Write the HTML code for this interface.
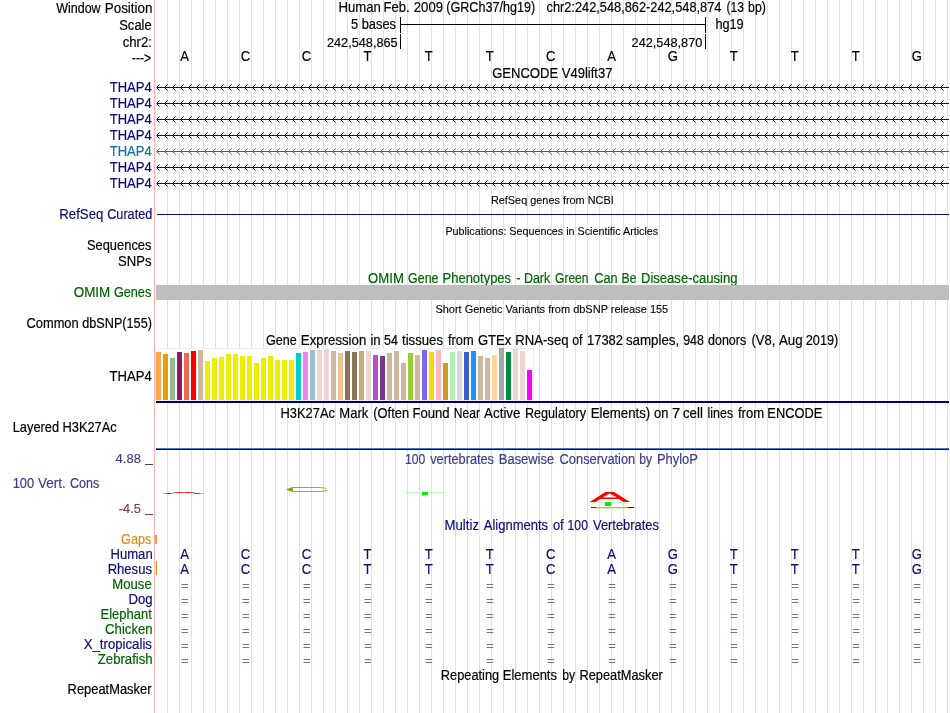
<!DOCTYPE html><html><head><meta charset="utf-8"><style>html,body{margin:0;padding:0;background:#fff;}svg{display:block;will-change:transform}text{font-family:"Liberation Sans",sans-serif;}</style></head><body>
<svg width="950" height="713" viewBox="0 0 950 713">
<rect x="0" y="0" width="950" height="713" fill="#fff"/>
<path d="M167.5 0V713M179.5 0V713M191.5 0V713M203.5 0V713M215.5 0V713M227.5 0V713M239.5 0V713M251.5 0V713M263.5 0V713M275.5 0V713M287.5 0V713M299.5 0V713M311.5 0V713M323.5 0V713M335.5 0V713M347.5 0V713M359.5 0V713M371.5 0V713M383.5 0V713M395.5 0V713M407.5 0V713M419.5 0V713M431.5 0V713M443.5 0V713M455.5 0V713M467.5 0V713M479.5 0V713M491.5 0V713M503.5 0V713M515.5 0V713M527.5 0V713M539.5 0V713M551.5 0V713M563.5 0V713M575.5 0V713M587.5 0V713M599.5 0V713M611.5 0V713M623.5 0V713M635.5 0V713M647.5 0V713M659.5 0V713M671.5 0V713M683.5 0V713M695.5 0V713M707.5 0V713M719.5 0V713M731.5 0V713M743.5 0V713M755.5 0V713M767.5 0V713M779.5 0V713M791.5 0V713M803.5 0V713M815.5 0V713M827.5 0V713M839.5 0V713M851.5 0V713M863.5 0V713M875.5 0V713M887.5 0V713M899.5 0V713M911.5 0V713M923.5 0V713M935.5 0V713M947.5 0V713" stroke="#ddddff" stroke-width="1" shape-rendering="crispEdges"/>
<text transform="translate(56.20 13) scale(0.9086 1.0)" font-size="13.75" fill="#000" stroke="#000" stroke-width="0.18" text-anchor="start" xml:space="preserve">Window</text>
<text transform="translate(104.72 13) scale(0.9774 1.0)" font-size="13.75" fill="#000" stroke="#000" stroke-width="0.18" text-anchor="start" xml:space="preserve">Position</text>
<text transform="translate(119.20 30) scale(0.9468 1.0)" font-size="13.75" fill="#000" stroke="#000" stroke-width="0.18" text-anchor="start" xml:space="preserve">Scale</text>
<text transform="translate(122.70 47) scale(0.9580 1.0)" font-size="13.75" fill="#000" stroke="#000" stroke-width="0.18" text-anchor="start" xml:space="preserve">chr2:</text>
<text transform="translate(131.80 63) scale(0.8925 1.0)" font-size="13.75" fill="#000" stroke="#000" stroke-width="0.18" text-anchor="start" xml:space="preserve">---&gt;</text>
<text transform="translate(338.44 12) scale(0.9560 1.0)" font-size="13.75" fill="#000" stroke="#000" stroke-width="0.18" text-anchor="start" xml:space="preserve">Human</text>
<text transform="translate(383.45 12) scale(0.9497 1.0)" font-size="13.75" fill="#000" stroke="#000" stroke-width="0.18" text-anchor="start" xml:space="preserve">Feb.</text>
<text transform="translate(413.80 12) scale(0.9552 1.0)" font-size="13.75" fill="#000" stroke="#000" stroke-width="0.18" text-anchor="start" xml:space="preserve">2009</text>
<text transform="translate(446.20 12) scale(0.9173 1.0)" font-size="13.75" fill="#000" stroke="#000" stroke-width="0.18" text-anchor="start" xml:space="preserve">(GRCh37/hg19)</text>
<text transform="translate(546.50 12) scale(0.9314 1.0)" font-size="13.75" fill="#000" stroke="#000" stroke-width="0.18" text-anchor="start" xml:space="preserve">chr2:242,548,862-242,548,874</text>
<text transform="translate(726.60 12) scale(0.8751 1.0)" font-size="13.75" fill="#000" stroke="#000" stroke-width="0.18" text-anchor="start" xml:space="preserve">(13</text>
<text transform="translate(748.10 12) scale(0.8915 1.0)" font-size="13.75" fill="#000" stroke="#000" stroke-width="0.18" text-anchor="start" xml:space="preserve">bp)</text>
<text transform="translate(350.90 29) scale(0.9382 1.0)" font-size="13.75" fill="#000" stroke="#000" stroke-width="0.18" text-anchor="start" xml:space="preserve">5 bases</text>
<text transform="translate(715.40 29) scale(0.9251 1.0)" font-size="13.75" fill="#000" stroke="#000" stroke-width="0.18" text-anchor="start" xml:space="preserve">hg19</text>
<text transform="translate(326.90 47) scale(0.9269 0.93)" font-size="13.75" fill="#000" stroke="#000" stroke-width="0.18" text-anchor="start" xml:space="preserve">242,548,865</text>
<text transform="translate(631.60 47) scale(0.9256 0.93)" font-size="13.75" fill="#000" stroke="#000" stroke-width="0.18" text-anchor="start" xml:space="preserve">242,548,870</text>
<g fill="#000">
<rect x="400" y="24" width="306" height="1"/>
<rect x="400" y="17" width="1" height="16"/><rect x="705" y="17" width="1" height="16"/>
<rect x="400" y="34" width="1" height="15"/><rect x="705" y="34" width="1" height="15"/>
</g>
<text transform="translate(184.50 61) scale(0.9500 1.0)" font-size="13.75" fill="#000" stroke="#000" stroke-width="0.18" text-anchor="middle" xml:space="preserve">A</text>
<text transform="translate(245.53 61) scale(0.9500 1.0)" font-size="13.75" fill="#000" stroke="#000" stroke-width="0.18" text-anchor="middle" xml:space="preserve">C</text>
<text transform="translate(306.56 61) scale(0.9500 1.0)" font-size="13.75" fill="#000" stroke="#000" stroke-width="0.18" text-anchor="middle" xml:space="preserve">C</text>
<text transform="translate(367.59 61) scale(0.9500 1.0)" font-size="13.75" fill="#000" stroke="#000" stroke-width="0.18" text-anchor="middle" xml:space="preserve">T</text>
<text transform="translate(428.62 61) scale(0.9500 1.0)" font-size="13.75" fill="#000" stroke="#000" stroke-width="0.18" text-anchor="middle" xml:space="preserve">T</text>
<text transform="translate(489.65 61) scale(0.9500 1.0)" font-size="13.75" fill="#000" stroke="#000" stroke-width="0.18" text-anchor="middle" xml:space="preserve">T</text>
<text transform="translate(550.68 61) scale(0.9500 1.0)" font-size="13.75" fill="#000" stroke="#000" stroke-width="0.18" text-anchor="middle" xml:space="preserve">C</text>
<text transform="translate(611.71 61) scale(0.9500 1.0)" font-size="13.75" fill="#000" stroke="#000" stroke-width="0.18" text-anchor="middle" xml:space="preserve">A</text>
<text transform="translate(672.74 61) scale(0.9500 1.0)" font-size="13.75" fill="#000" stroke="#000" stroke-width="0.18" text-anchor="middle" xml:space="preserve">G</text>
<text transform="translate(733.77 61) scale(0.9500 1.0)" font-size="13.75" fill="#000" stroke="#000" stroke-width="0.18" text-anchor="middle" xml:space="preserve">T</text>
<text transform="translate(794.80 61) scale(0.9500 1.0)" font-size="13.75" fill="#000" stroke="#000" stroke-width="0.18" text-anchor="middle" xml:space="preserve">T</text>
<text transform="translate(855.83 61) scale(0.9500 1.0)" font-size="13.75" fill="#000" stroke="#000" stroke-width="0.18" text-anchor="middle" xml:space="preserve">T</text>
<text transform="translate(916.86 61) scale(0.9500 1.0)" font-size="13.75" fill="#000" stroke="#000" stroke-width="0.18" text-anchor="middle" xml:space="preserve">G</text>
<text transform="translate(492.20 78) scale(0.9493 1.0)" font-size="13.75" fill="#000" stroke="#000" stroke-width="0.18" text-anchor="start" xml:space="preserve">GENCODE V49lift37</text>
<text transform="translate(109.70 92) scale(0.9492 1.0)" font-size="13.75" fill="#0c0c78" stroke="#0c0c78" stroke-width="0.18" text-anchor="start" xml:space="preserve">THAP4</text>
<path d="M157 87h792v1h-792zM157 86h1v3h-1zM158 85h1v1h-1zM158 89h1v1h-1zM165 86h1v3h-1zM166 85h1v1h-1zM166 89h1v1h-1zM173 86h1v3h-1zM174 85h1v1h-1zM174 89h1v1h-1zM181 86h1v3h-1zM182 85h1v1h-1zM182 89h1v1h-1zM189 86h1v3h-1zM190 85h1v1h-1zM190 89h1v1h-1zM197 86h1v3h-1zM198 85h1v1h-1zM198 89h1v1h-1zM205 86h1v3h-1zM206 85h1v1h-1zM206 89h1v1h-1zM213 86h1v3h-1zM214 85h1v1h-1zM214 89h1v1h-1zM221 86h1v3h-1zM222 85h1v1h-1zM222 89h1v1h-1zM229 86h1v3h-1zM230 85h1v1h-1zM230 89h1v1h-1zM237 86h1v3h-1zM238 85h1v1h-1zM238 89h1v1h-1zM245 86h1v3h-1zM246 85h1v1h-1zM246 89h1v1h-1zM253 86h1v3h-1zM254 85h1v1h-1zM254 89h1v1h-1zM261 86h1v3h-1zM262 85h1v1h-1zM262 89h1v1h-1zM269 86h1v3h-1zM270 85h1v1h-1zM270 89h1v1h-1zM277 86h1v3h-1zM278 85h1v1h-1zM278 89h1v1h-1zM285 86h1v3h-1zM286 85h1v1h-1zM286 89h1v1h-1zM293 86h1v3h-1zM294 85h1v1h-1zM294 89h1v1h-1zM301 86h1v3h-1zM302 85h1v1h-1zM302 89h1v1h-1zM309 86h1v3h-1zM310 85h1v1h-1zM310 89h1v1h-1zM317 86h1v3h-1zM318 85h1v1h-1zM318 89h1v1h-1zM325 86h1v3h-1zM326 85h1v1h-1zM326 89h1v1h-1zM333 86h1v3h-1zM334 85h1v1h-1zM334 89h1v1h-1zM341 86h1v3h-1zM342 85h1v1h-1zM342 89h1v1h-1zM349 86h1v3h-1zM350 85h1v1h-1zM350 89h1v1h-1zM357 86h1v3h-1zM358 85h1v1h-1zM358 89h1v1h-1zM365 86h1v3h-1zM366 85h1v1h-1zM366 89h1v1h-1zM373 86h1v3h-1zM374 85h1v1h-1zM374 89h1v1h-1zM381 86h1v3h-1zM382 85h1v1h-1zM382 89h1v1h-1zM389 86h1v3h-1zM390 85h1v1h-1zM390 89h1v1h-1zM397 86h1v3h-1zM398 85h1v1h-1zM398 89h1v1h-1zM405 86h1v3h-1zM406 85h1v1h-1zM406 89h1v1h-1zM413 86h1v3h-1zM414 85h1v1h-1zM414 89h1v1h-1zM421 86h1v3h-1zM422 85h1v1h-1zM422 89h1v1h-1zM429 86h1v3h-1zM430 85h1v1h-1zM430 89h1v1h-1zM437 86h1v3h-1zM438 85h1v1h-1zM438 89h1v1h-1zM445 86h1v3h-1zM446 85h1v1h-1zM446 89h1v1h-1zM453 86h1v3h-1zM454 85h1v1h-1zM454 89h1v1h-1zM461 86h1v3h-1zM462 85h1v1h-1zM462 89h1v1h-1zM469 86h1v3h-1zM470 85h1v1h-1zM470 89h1v1h-1zM477 86h1v3h-1zM478 85h1v1h-1zM478 89h1v1h-1zM485 86h1v3h-1zM486 85h1v1h-1zM486 89h1v1h-1zM493 86h1v3h-1zM494 85h1v1h-1zM494 89h1v1h-1zM501 86h1v3h-1zM502 85h1v1h-1zM502 89h1v1h-1zM509 86h1v3h-1zM510 85h1v1h-1zM510 89h1v1h-1zM517 86h1v3h-1zM518 85h1v1h-1zM518 89h1v1h-1zM525 86h1v3h-1zM526 85h1v1h-1zM526 89h1v1h-1zM533 86h1v3h-1zM534 85h1v1h-1zM534 89h1v1h-1zM541 86h1v3h-1zM542 85h1v1h-1zM542 89h1v1h-1zM549 86h1v3h-1zM550 85h1v1h-1zM550 89h1v1h-1zM557 86h1v3h-1zM558 85h1v1h-1zM558 89h1v1h-1zM565 86h1v3h-1zM566 85h1v1h-1zM566 89h1v1h-1zM573 86h1v3h-1zM574 85h1v1h-1zM574 89h1v1h-1zM581 86h1v3h-1zM582 85h1v1h-1zM582 89h1v1h-1zM589 86h1v3h-1zM590 85h1v1h-1zM590 89h1v1h-1zM597 86h1v3h-1zM598 85h1v1h-1zM598 89h1v1h-1zM605 86h1v3h-1zM606 85h1v1h-1zM606 89h1v1h-1zM613 86h1v3h-1zM614 85h1v1h-1zM614 89h1v1h-1zM621 86h1v3h-1zM622 85h1v1h-1zM622 89h1v1h-1zM629 86h1v3h-1zM630 85h1v1h-1zM630 89h1v1h-1zM637 86h1v3h-1zM638 85h1v1h-1zM638 89h1v1h-1zM645 86h1v3h-1zM646 85h1v1h-1zM646 89h1v1h-1zM653 86h1v3h-1zM654 85h1v1h-1zM654 89h1v1h-1zM661 86h1v3h-1zM662 85h1v1h-1zM662 89h1v1h-1zM669 86h1v3h-1zM670 85h1v1h-1zM670 89h1v1h-1zM677 86h1v3h-1zM678 85h1v1h-1zM678 89h1v1h-1zM685 86h1v3h-1zM686 85h1v1h-1zM686 89h1v1h-1zM693 86h1v3h-1zM694 85h1v1h-1zM694 89h1v1h-1zM701 86h1v3h-1zM702 85h1v1h-1zM702 89h1v1h-1zM709 86h1v3h-1zM710 85h1v1h-1zM710 89h1v1h-1zM717 86h1v3h-1zM718 85h1v1h-1zM718 89h1v1h-1zM725 86h1v3h-1zM726 85h1v1h-1zM726 89h1v1h-1zM733 86h1v3h-1zM734 85h1v1h-1zM734 89h1v1h-1zM741 86h1v3h-1zM742 85h1v1h-1zM742 89h1v1h-1zM749 86h1v3h-1zM750 85h1v1h-1zM750 89h1v1h-1zM757 86h1v3h-1zM758 85h1v1h-1zM758 89h1v1h-1zM765 86h1v3h-1zM766 85h1v1h-1zM766 89h1v1h-1zM773 86h1v3h-1zM774 85h1v1h-1zM774 89h1v1h-1zM781 86h1v3h-1zM782 85h1v1h-1zM782 89h1v1h-1zM789 86h1v3h-1zM790 85h1v1h-1zM790 89h1v1h-1zM797 86h1v3h-1zM798 85h1v1h-1zM798 89h1v1h-1zM805 86h1v3h-1zM806 85h1v1h-1zM806 89h1v1h-1zM813 86h1v3h-1zM814 85h1v1h-1zM814 89h1v1h-1zM821 86h1v3h-1zM822 85h1v1h-1zM822 89h1v1h-1zM829 86h1v3h-1zM830 85h1v1h-1zM830 89h1v1h-1zM837 86h1v3h-1zM838 85h1v1h-1zM838 89h1v1h-1zM845 86h1v3h-1zM846 85h1v1h-1zM846 89h1v1h-1zM853 86h1v3h-1zM854 85h1v1h-1zM854 89h1v1h-1zM861 86h1v3h-1zM862 85h1v1h-1zM862 89h1v1h-1zM869 86h1v3h-1zM870 85h1v1h-1zM870 89h1v1h-1zM877 86h1v3h-1zM878 85h1v1h-1zM878 89h1v1h-1zM885 86h1v3h-1zM886 85h1v1h-1zM886 89h1v1h-1zM893 86h1v3h-1zM894 85h1v1h-1zM894 89h1v1h-1zM901 86h1v3h-1zM902 85h1v1h-1zM902 89h1v1h-1zM909 86h1v3h-1zM910 85h1v1h-1zM910 89h1v1h-1zM917 86h1v3h-1zM918 85h1v1h-1zM918 89h1v1h-1zM925 86h1v3h-1zM926 85h1v1h-1zM926 89h1v1h-1zM933 86h1v3h-1zM934 85h1v1h-1zM934 89h1v1h-1zM941 86h1v3h-1zM942 85h1v1h-1zM942 89h1v1h-1z" fill="#0c0c78"/>
<path d="M159 84h1v1h-1zM159 90h1v1h-1zM156 87h1v1h-1zM167 84h1v1h-1zM167 90h1v1h-1zM164 87h1v1h-1zM175 84h1v1h-1zM175 90h1v1h-1zM172 87h1v1h-1zM183 84h1v1h-1zM183 90h1v1h-1zM180 87h1v1h-1zM191 84h1v1h-1zM191 90h1v1h-1zM188 87h1v1h-1zM199 84h1v1h-1zM199 90h1v1h-1zM196 87h1v1h-1zM207 84h1v1h-1zM207 90h1v1h-1zM204 87h1v1h-1zM215 84h1v1h-1zM215 90h1v1h-1zM212 87h1v1h-1zM223 84h1v1h-1zM223 90h1v1h-1zM220 87h1v1h-1zM231 84h1v1h-1zM231 90h1v1h-1zM228 87h1v1h-1zM239 84h1v1h-1zM239 90h1v1h-1zM236 87h1v1h-1zM247 84h1v1h-1zM247 90h1v1h-1zM244 87h1v1h-1zM255 84h1v1h-1zM255 90h1v1h-1zM252 87h1v1h-1zM263 84h1v1h-1zM263 90h1v1h-1zM260 87h1v1h-1zM271 84h1v1h-1zM271 90h1v1h-1zM268 87h1v1h-1zM279 84h1v1h-1zM279 90h1v1h-1zM276 87h1v1h-1zM287 84h1v1h-1zM287 90h1v1h-1zM284 87h1v1h-1zM295 84h1v1h-1zM295 90h1v1h-1zM292 87h1v1h-1zM303 84h1v1h-1zM303 90h1v1h-1zM300 87h1v1h-1zM311 84h1v1h-1zM311 90h1v1h-1zM308 87h1v1h-1zM319 84h1v1h-1zM319 90h1v1h-1zM316 87h1v1h-1zM327 84h1v1h-1zM327 90h1v1h-1zM324 87h1v1h-1zM335 84h1v1h-1zM335 90h1v1h-1zM332 87h1v1h-1zM343 84h1v1h-1zM343 90h1v1h-1zM340 87h1v1h-1zM351 84h1v1h-1zM351 90h1v1h-1zM348 87h1v1h-1zM359 84h1v1h-1zM359 90h1v1h-1zM356 87h1v1h-1zM367 84h1v1h-1zM367 90h1v1h-1zM364 87h1v1h-1zM375 84h1v1h-1zM375 90h1v1h-1zM372 87h1v1h-1zM383 84h1v1h-1zM383 90h1v1h-1zM380 87h1v1h-1zM391 84h1v1h-1zM391 90h1v1h-1zM388 87h1v1h-1zM399 84h1v1h-1zM399 90h1v1h-1zM396 87h1v1h-1zM407 84h1v1h-1zM407 90h1v1h-1zM404 87h1v1h-1zM415 84h1v1h-1zM415 90h1v1h-1zM412 87h1v1h-1zM423 84h1v1h-1zM423 90h1v1h-1zM420 87h1v1h-1zM431 84h1v1h-1zM431 90h1v1h-1zM428 87h1v1h-1zM439 84h1v1h-1zM439 90h1v1h-1zM436 87h1v1h-1zM447 84h1v1h-1zM447 90h1v1h-1zM444 87h1v1h-1zM455 84h1v1h-1zM455 90h1v1h-1zM452 87h1v1h-1zM463 84h1v1h-1zM463 90h1v1h-1zM460 87h1v1h-1zM471 84h1v1h-1zM471 90h1v1h-1zM468 87h1v1h-1zM479 84h1v1h-1zM479 90h1v1h-1zM476 87h1v1h-1zM487 84h1v1h-1zM487 90h1v1h-1zM484 87h1v1h-1zM495 84h1v1h-1zM495 90h1v1h-1zM492 87h1v1h-1zM503 84h1v1h-1zM503 90h1v1h-1zM500 87h1v1h-1zM511 84h1v1h-1zM511 90h1v1h-1zM508 87h1v1h-1zM519 84h1v1h-1zM519 90h1v1h-1zM516 87h1v1h-1zM527 84h1v1h-1zM527 90h1v1h-1zM524 87h1v1h-1zM535 84h1v1h-1zM535 90h1v1h-1zM532 87h1v1h-1zM543 84h1v1h-1zM543 90h1v1h-1zM540 87h1v1h-1zM551 84h1v1h-1zM551 90h1v1h-1zM548 87h1v1h-1zM559 84h1v1h-1zM559 90h1v1h-1zM556 87h1v1h-1zM567 84h1v1h-1zM567 90h1v1h-1zM564 87h1v1h-1zM575 84h1v1h-1zM575 90h1v1h-1zM572 87h1v1h-1zM583 84h1v1h-1zM583 90h1v1h-1zM580 87h1v1h-1zM591 84h1v1h-1zM591 90h1v1h-1zM588 87h1v1h-1zM599 84h1v1h-1zM599 90h1v1h-1zM596 87h1v1h-1zM607 84h1v1h-1zM607 90h1v1h-1zM604 87h1v1h-1zM615 84h1v1h-1zM615 90h1v1h-1zM612 87h1v1h-1zM623 84h1v1h-1zM623 90h1v1h-1zM620 87h1v1h-1zM631 84h1v1h-1zM631 90h1v1h-1zM628 87h1v1h-1zM639 84h1v1h-1zM639 90h1v1h-1zM636 87h1v1h-1zM647 84h1v1h-1zM647 90h1v1h-1zM644 87h1v1h-1zM655 84h1v1h-1zM655 90h1v1h-1zM652 87h1v1h-1zM663 84h1v1h-1zM663 90h1v1h-1zM660 87h1v1h-1zM671 84h1v1h-1zM671 90h1v1h-1zM668 87h1v1h-1zM679 84h1v1h-1zM679 90h1v1h-1zM676 87h1v1h-1zM687 84h1v1h-1zM687 90h1v1h-1zM684 87h1v1h-1zM695 84h1v1h-1zM695 90h1v1h-1zM692 87h1v1h-1zM703 84h1v1h-1zM703 90h1v1h-1zM700 87h1v1h-1zM711 84h1v1h-1zM711 90h1v1h-1zM708 87h1v1h-1zM719 84h1v1h-1zM719 90h1v1h-1zM716 87h1v1h-1zM727 84h1v1h-1zM727 90h1v1h-1zM724 87h1v1h-1zM735 84h1v1h-1zM735 90h1v1h-1zM732 87h1v1h-1zM743 84h1v1h-1zM743 90h1v1h-1zM740 87h1v1h-1zM751 84h1v1h-1zM751 90h1v1h-1zM748 87h1v1h-1zM759 84h1v1h-1zM759 90h1v1h-1zM756 87h1v1h-1zM767 84h1v1h-1zM767 90h1v1h-1zM764 87h1v1h-1zM775 84h1v1h-1zM775 90h1v1h-1zM772 87h1v1h-1zM783 84h1v1h-1zM783 90h1v1h-1zM780 87h1v1h-1zM791 84h1v1h-1zM791 90h1v1h-1zM788 87h1v1h-1zM799 84h1v1h-1zM799 90h1v1h-1zM796 87h1v1h-1zM807 84h1v1h-1zM807 90h1v1h-1zM804 87h1v1h-1zM815 84h1v1h-1zM815 90h1v1h-1zM812 87h1v1h-1zM823 84h1v1h-1zM823 90h1v1h-1zM820 87h1v1h-1zM831 84h1v1h-1zM831 90h1v1h-1zM828 87h1v1h-1zM839 84h1v1h-1zM839 90h1v1h-1zM836 87h1v1h-1zM847 84h1v1h-1zM847 90h1v1h-1zM844 87h1v1h-1zM855 84h1v1h-1zM855 90h1v1h-1zM852 87h1v1h-1zM863 84h1v1h-1zM863 90h1v1h-1zM860 87h1v1h-1zM871 84h1v1h-1zM871 90h1v1h-1zM868 87h1v1h-1zM879 84h1v1h-1zM879 90h1v1h-1zM876 87h1v1h-1zM887 84h1v1h-1zM887 90h1v1h-1zM884 87h1v1h-1zM895 84h1v1h-1zM895 90h1v1h-1zM892 87h1v1h-1zM903 84h1v1h-1zM903 90h1v1h-1zM900 87h1v1h-1zM911 84h1v1h-1zM911 90h1v1h-1zM908 87h1v1h-1zM919 84h1v1h-1zM919 90h1v1h-1zM916 87h1v1h-1zM927 84h1v1h-1zM927 90h1v1h-1zM924 87h1v1h-1zM935 84h1v1h-1zM935 90h1v1h-1zM932 87h1v1h-1zM943 84h1v1h-1zM943 90h1v1h-1zM940 87h1v1h-1z" fill="#0c0c78" fill-opacity="0.55"/>
<text transform="translate(109.70 108) scale(0.9492 1.0)" font-size="13.75" fill="#0c0c78" stroke="#0c0c78" stroke-width="0.18" text-anchor="start" xml:space="preserve">THAP4</text>
<path d="M157 103h792v1h-792zM157 102h1v3h-1zM158 101h1v1h-1zM158 105h1v1h-1zM165 102h1v3h-1zM166 101h1v1h-1zM166 105h1v1h-1zM173 102h1v3h-1zM174 101h1v1h-1zM174 105h1v1h-1zM181 102h1v3h-1zM182 101h1v1h-1zM182 105h1v1h-1zM189 102h1v3h-1zM190 101h1v1h-1zM190 105h1v1h-1zM197 102h1v3h-1zM198 101h1v1h-1zM198 105h1v1h-1zM205 102h1v3h-1zM206 101h1v1h-1zM206 105h1v1h-1zM213 102h1v3h-1zM214 101h1v1h-1zM214 105h1v1h-1zM221 102h1v3h-1zM222 101h1v1h-1zM222 105h1v1h-1zM229 102h1v3h-1zM230 101h1v1h-1zM230 105h1v1h-1zM237 102h1v3h-1zM238 101h1v1h-1zM238 105h1v1h-1zM245 102h1v3h-1zM246 101h1v1h-1zM246 105h1v1h-1zM253 102h1v3h-1zM254 101h1v1h-1zM254 105h1v1h-1zM261 102h1v3h-1zM262 101h1v1h-1zM262 105h1v1h-1zM269 102h1v3h-1zM270 101h1v1h-1zM270 105h1v1h-1zM277 102h1v3h-1zM278 101h1v1h-1zM278 105h1v1h-1zM285 102h1v3h-1zM286 101h1v1h-1zM286 105h1v1h-1zM293 102h1v3h-1zM294 101h1v1h-1zM294 105h1v1h-1zM301 102h1v3h-1zM302 101h1v1h-1zM302 105h1v1h-1zM309 102h1v3h-1zM310 101h1v1h-1zM310 105h1v1h-1zM317 102h1v3h-1zM318 101h1v1h-1zM318 105h1v1h-1zM325 102h1v3h-1zM326 101h1v1h-1zM326 105h1v1h-1zM333 102h1v3h-1zM334 101h1v1h-1zM334 105h1v1h-1zM341 102h1v3h-1zM342 101h1v1h-1zM342 105h1v1h-1zM349 102h1v3h-1zM350 101h1v1h-1zM350 105h1v1h-1zM357 102h1v3h-1zM358 101h1v1h-1zM358 105h1v1h-1zM365 102h1v3h-1zM366 101h1v1h-1zM366 105h1v1h-1zM373 102h1v3h-1zM374 101h1v1h-1zM374 105h1v1h-1zM381 102h1v3h-1zM382 101h1v1h-1zM382 105h1v1h-1zM389 102h1v3h-1zM390 101h1v1h-1zM390 105h1v1h-1zM397 102h1v3h-1zM398 101h1v1h-1zM398 105h1v1h-1zM405 102h1v3h-1zM406 101h1v1h-1zM406 105h1v1h-1zM413 102h1v3h-1zM414 101h1v1h-1zM414 105h1v1h-1zM421 102h1v3h-1zM422 101h1v1h-1zM422 105h1v1h-1zM429 102h1v3h-1zM430 101h1v1h-1zM430 105h1v1h-1zM437 102h1v3h-1zM438 101h1v1h-1zM438 105h1v1h-1zM445 102h1v3h-1zM446 101h1v1h-1zM446 105h1v1h-1zM453 102h1v3h-1zM454 101h1v1h-1zM454 105h1v1h-1zM461 102h1v3h-1zM462 101h1v1h-1zM462 105h1v1h-1zM469 102h1v3h-1zM470 101h1v1h-1zM470 105h1v1h-1zM477 102h1v3h-1zM478 101h1v1h-1zM478 105h1v1h-1zM485 102h1v3h-1zM486 101h1v1h-1zM486 105h1v1h-1zM493 102h1v3h-1zM494 101h1v1h-1zM494 105h1v1h-1zM501 102h1v3h-1zM502 101h1v1h-1zM502 105h1v1h-1zM509 102h1v3h-1zM510 101h1v1h-1zM510 105h1v1h-1zM517 102h1v3h-1zM518 101h1v1h-1zM518 105h1v1h-1zM525 102h1v3h-1zM526 101h1v1h-1zM526 105h1v1h-1zM533 102h1v3h-1zM534 101h1v1h-1zM534 105h1v1h-1zM541 102h1v3h-1zM542 101h1v1h-1zM542 105h1v1h-1zM549 102h1v3h-1zM550 101h1v1h-1zM550 105h1v1h-1zM557 102h1v3h-1zM558 101h1v1h-1zM558 105h1v1h-1zM565 102h1v3h-1zM566 101h1v1h-1zM566 105h1v1h-1zM573 102h1v3h-1zM574 101h1v1h-1zM574 105h1v1h-1zM581 102h1v3h-1zM582 101h1v1h-1zM582 105h1v1h-1zM589 102h1v3h-1zM590 101h1v1h-1zM590 105h1v1h-1zM597 102h1v3h-1zM598 101h1v1h-1zM598 105h1v1h-1zM605 102h1v3h-1zM606 101h1v1h-1zM606 105h1v1h-1zM613 102h1v3h-1zM614 101h1v1h-1zM614 105h1v1h-1zM621 102h1v3h-1zM622 101h1v1h-1zM622 105h1v1h-1zM629 102h1v3h-1zM630 101h1v1h-1zM630 105h1v1h-1zM637 102h1v3h-1zM638 101h1v1h-1zM638 105h1v1h-1zM645 102h1v3h-1zM646 101h1v1h-1zM646 105h1v1h-1zM653 102h1v3h-1zM654 101h1v1h-1zM654 105h1v1h-1zM661 102h1v3h-1zM662 101h1v1h-1zM662 105h1v1h-1zM669 102h1v3h-1zM670 101h1v1h-1zM670 105h1v1h-1zM677 102h1v3h-1zM678 101h1v1h-1zM678 105h1v1h-1zM685 102h1v3h-1zM686 101h1v1h-1zM686 105h1v1h-1zM693 102h1v3h-1zM694 101h1v1h-1zM694 105h1v1h-1zM701 102h1v3h-1zM702 101h1v1h-1zM702 105h1v1h-1zM709 102h1v3h-1zM710 101h1v1h-1zM710 105h1v1h-1zM717 102h1v3h-1zM718 101h1v1h-1zM718 105h1v1h-1zM725 102h1v3h-1zM726 101h1v1h-1zM726 105h1v1h-1zM733 102h1v3h-1zM734 101h1v1h-1zM734 105h1v1h-1zM741 102h1v3h-1zM742 101h1v1h-1zM742 105h1v1h-1zM749 102h1v3h-1zM750 101h1v1h-1zM750 105h1v1h-1zM757 102h1v3h-1zM758 101h1v1h-1zM758 105h1v1h-1zM765 102h1v3h-1zM766 101h1v1h-1zM766 105h1v1h-1zM773 102h1v3h-1zM774 101h1v1h-1zM774 105h1v1h-1zM781 102h1v3h-1zM782 101h1v1h-1zM782 105h1v1h-1zM789 102h1v3h-1zM790 101h1v1h-1zM790 105h1v1h-1zM797 102h1v3h-1zM798 101h1v1h-1zM798 105h1v1h-1zM805 102h1v3h-1zM806 101h1v1h-1zM806 105h1v1h-1zM813 102h1v3h-1zM814 101h1v1h-1zM814 105h1v1h-1zM821 102h1v3h-1zM822 101h1v1h-1zM822 105h1v1h-1zM829 102h1v3h-1zM830 101h1v1h-1zM830 105h1v1h-1zM837 102h1v3h-1zM838 101h1v1h-1zM838 105h1v1h-1zM845 102h1v3h-1zM846 101h1v1h-1zM846 105h1v1h-1zM853 102h1v3h-1zM854 101h1v1h-1zM854 105h1v1h-1zM861 102h1v3h-1zM862 101h1v1h-1zM862 105h1v1h-1zM869 102h1v3h-1zM870 101h1v1h-1zM870 105h1v1h-1zM877 102h1v3h-1zM878 101h1v1h-1zM878 105h1v1h-1zM885 102h1v3h-1zM886 101h1v1h-1zM886 105h1v1h-1zM893 102h1v3h-1zM894 101h1v1h-1zM894 105h1v1h-1zM901 102h1v3h-1zM902 101h1v1h-1zM902 105h1v1h-1zM909 102h1v3h-1zM910 101h1v1h-1zM910 105h1v1h-1zM917 102h1v3h-1zM918 101h1v1h-1zM918 105h1v1h-1zM925 102h1v3h-1zM926 101h1v1h-1zM926 105h1v1h-1zM933 102h1v3h-1zM934 101h1v1h-1zM934 105h1v1h-1zM941 102h1v3h-1zM942 101h1v1h-1zM942 105h1v1h-1z" fill="#0c0c78"/>
<path d="M159 100h1v1h-1zM159 106h1v1h-1zM156 103h1v1h-1zM167 100h1v1h-1zM167 106h1v1h-1zM164 103h1v1h-1zM175 100h1v1h-1zM175 106h1v1h-1zM172 103h1v1h-1zM183 100h1v1h-1zM183 106h1v1h-1zM180 103h1v1h-1zM191 100h1v1h-1zM191 106h1v1h-1zM188 103h1v1h-1zM199 100h1v1h-1zM199 106h1v1h-1zM196 103h1v1h-1zM207 100h1v1h-1zM207 106h1v1h-1zM204 103h1v1h-1zM215 100h1v1h-1zM215 106h1v1h-1zM212 103h1v1h-1zM223 100h1v1h-1zM223 106h1v1h-1zM220 103h1v1h-1zM231 100h1v1h-1zM231 106h1v1h-1zM228 103h1v1h-1zM239 100h1v1h-1zM239 106h1v1h-1zM236 103h1v1h-1zM247 100h1v1h-1zM247 106h1v1h-1zM244 103h1v1h-1zM255 100h1v1h-1zM255 106h1v1h-1zM252 103h1v1h-1zM263 100h1v1h-1zM263 106h1v1h-1zM260 103h1v1h-1zM271 100h1v1h-1zM271 106h1v1h-1zM268 103h1v1h-1zM279 100h1v1h-1zM279 106h1v1h-1zM276 103h1v1h-1zM287 100h1v1h-1zM287 106h1v1h-1zM284 103h1v1h-1zM295 100h1v1h-1zM295 106h1v1h-1zM292 103h1v1h-1zM303 100h1v1h-1zM303 106h1v1h-1zM300 103h1v1h-1zM311 100h1v1h-1zM311 106h1v1h-1zM308 103h1v1h-1zM319 100h1v1h-1zM319 106h1v1h-1zM316 103h1v1h-1zM327 100h1v1h-1zM327 106h1v1h-1zM324 103h1v1h-1zM335 100h1v1h-1zM335 106h1v1h-1zM332 103h1v1h-1zM343 100h1v1h-1zM343 106h1v1h-1zM340 103h1v1h-1zM351 100h1v1h-1zM351 106h1v1h-1zM348 103h1v1h-1zM359 100h1v1h-1zM359 106h1v1h-1zM356 103h1v1h-1zM367 100h1v1h-1zM367 106h1v1h-1zM364 103h1v1h-1zM375 100h1v1h-1zM375 106h1v1h-1zM372 103h1v1h-1zM383 100h1v1h-1zM383 106h1v1h-1zM380 103h1v1h-1zM391 100h1v1h-1zM391 106h1v1h-1zM388 103h1v1h-1zM399 100h1v1h-1zM399 106h1v1h-1zM396 103h1v1h-1zM407 100h1v1h-1zM407 106h1v1h-1zM404 103h1v1h-1zM415 100h1v1h-1zM415 106h1v1h-1zM412 103h1v1h-1zM423 100h1v1h-1zM423 106h1v1h-1zM420 103h1v1h-1zM431 100h1v1h-1zM431 106h1v1h-1zM428 103h1v1h-1zM439 100h1v1h-1zM439 106h1v1h-1zM436 103h1v1h-1zM447 100h1v1h-1zM447 106h1v1h-1zM444 103h1v1h-1zM455 100h1v1h-1zM455 106h1v1h-1zM452 103h1v1h-1zM463 100h1v1h-1zM463 106h1v1h-1zM460 103h1v1h-1zM471 100h1v1h-1zM471 106h1v1h-1zM468 103h1v1h-1zM479 100h1v1h-1zM479 106h1v1h-1zM476 103h1v1h-1zM487 100h1v1h-1zM487 106h1v1h-1zM484 103h1v1h-1zM495 100h1v1h-1zM495 106h1v1h-1zM492 103h1v1h-1zM503 100h1v1h-1zM503 106h1v1h-1zM500 103h1v1h-1zM511 100h1v1h-1zM511 106h1v1h-1zM508 103h1v1h-1zM519 100h1v1h-1zM519 106h1v1h-1zM516 103h1v1h-1zM527 100h1v1h-1zM527 106h1v1h-1zM524 103h1v1h-1zM535 100h1v1h-1zM535 106h1v1h-1zM532 103h1v1h-1zM543 100h1v1h-1zM543 106h1v1h-1zM540 103h1v1h-1zM551 100h1v1h-1zM551 106h1v1h-1zM548 103h1v1h-1zM559 100h1v1h-1zM559 106h1v1h-1zM556 103h1v1h-1zM567 100h1v1h-1zM567 106h1v1h-1zM564 103h1v1h-1zM575 100h1v1h-1zM575 106h1v1h-1zM572 103h1v1h-1zM583 100h1v1h-1zM583 106h1v1h-1zM580 103h1v1h-1zM591 100h1v1h-1zM591 106h1v1h-1zM588 103h1v1h-1zM599 100h1v1h-1zM599 106h1v1h-1zM596 103h1v1h-1zM607 100h1v1h-1zM607 106h1v1h-1zM604 103h1v1h-1zM615 100h1v1h-1zM615 106h1v1h-1zM612 103h1v1h-1zM623 100h1v1h-1zM623 106h1v1h-1zM620 103h1v1h-1zM631 100h1v1h-1zM631 106h1v1h-1zM628 103h1v1h-1zM639 100h1v1h-1zM639 106h1v1h-1zM636 103h1v1h-1zM647 100h1v1h-1zM647 106h1v1h-1zM644 103h1v1h-1zM655 100h1v1h-1zM655 106h1v1h-1zM652 103h1v1h-1zM663 100h1v1h-1zM663 106h1v1h-1zM660 103h1v1h-1zM671 100h1v1h-1zM671 106h1v1h-1zM668 103h1v1h-1zM679 100h1v1h-1zM679 106h1v1h-1zM676 103h1v1h-1zM687 100h1v1h-1zM687 106h1v1h-1zM684 103h1v1h-1zM695 100h1v1h-1zM695 106h1v1h-1zM692 103h1v1h-1zM703 100h1v1h-1zM703 106h1v1h-1zM700 103h1v1h-1zM711 100h1v1h-1zM711 106h1v1h-1zM708 103h1v1h-1zM719 100h1v1h-1zM719 106h1v1h-1zM716 103h1v1h-1zM727 100h1v1h-1zM727 106h1v1h-1zM724 103h1v1h-1zM735 100h1v1h-1zM735 106h1v1h-1zM732 103h1v1h-1zM743 100h1v1h-1zM743 106h1v1h-1zM740 103h1v1h-1zM751 100h1v1h-1zM751 106h1v1h-1zM748 103h1v1h-1zM759 100h1v1h-1zM759 106h1v1h-1zM756 103h1v1h-1zM767 100h1v1h-1zM767 106h1v1h-1zM764 103h1v1h-1zM775 100h1v1h-1zM775 106h1v1h-1zM772 103h1v1h-1zM783 100h1v1h-1zM783 106h1v1h-1zM780 103h1v1h-1zM791 100h1v1h-1zM791 106h1v1h-1zM788 103h1v1h-1zM799 100h1v1h-1zM799 106h1v1h-1zM796 103h1v1h-1zM807 100h1v1h-1zM807 106h1v1h-1zM804 103h1v1h-1zM815 100h1v1h-1zM815 106h1v1h-1zM812 103h1v1h-1zM823 100h1v1h-1zM823 106h1v1h-1zM820 103h1v1h-1zM831 100h1v1h-1zM831 106h1v1h-1zM828 103h1v1h-1zM839 100h1v1h-1zM839 106h1v1h-1zM836 103h1v1h-1zM847 100h1v1h-1zM847 106h1v1h-1zM844 103h1v1h-1zM855 100h1v1h-1zM855 106h1v1h-1zM852 103h1v1h-1zM863 100h1v1h-1zM863 106h1v1h-1zM860 103h1v1h-1zM871 100h1v1h-1zM871 106h1v1h-1zM868 103h1v1h-1zM879 100h1v1h-1zM879 106h1v1h-1zM876 103h1v1h-1zM887 100h1v1h-1zM887 106h1v1h-1zM884 103h1v1h-1zM895 100h1v1h-1zM895 106h1v1h-1zM892 103h1v1h-1zM903 100h1v1h-1zM903 106h1v1h-1zM900 103h1v1h-1zM911 100h1v1h-1zM911 106h1v1h-1zM908 103h1v1h-1zM919 100h1v1h-1zM919 106h1v1h-1zM916 103h1v1h-1zM927 100h1v1h-1zM927 106h1v1h-1zM924 103h1v1h-1zM935 100h1v1h-1zM935 106h1v1h-1zM932 103h1v1h-1zM943 100h1v1h-1zM943 106h1v1h-1zM940 103h1v1h-1z" fill="#0c0c78" fill-opacity="0.55"/>
<text transform="translate(109.70 124) scale(0.9492 1.0)" font-size="13.75" fill="#0c0c78" stroke="#0c0c78" stroke-width="0.18" text-anchor="start" xml:space="preserve">THAP4</text>
<path d="M157 119h792v1h-792zM157 118h1v3h-1zM158 117h1v1h-1zM158 121h1v1h-1zM165 118h1v3h-1zM166 117h1v1h-1zM166 121h1v1h-1zM173 118h1v3h-1zM174 117h1v1h-1zM174 121h1v1h-1zM181 118h1v3h-1zM182 117h1v1h-1zM182 121h1v1h-1zM189 118h1v3h-1zM190 117h1v1h-1zM190 121h1v1h-1zM197 118h1v3h-1zM198 117h1v1h-1zM198 121h1v1h-1zM205 118h1v3h-1zM206 117h1v1h-1zM206 121h1v1h-1zM213 118h1v3h-1zM214 117h1v1h-1zM214 121h1v1h-1zM221 118h1v3h-1zM222 117h1v1h-1zM222 121h1v1h-1zM229 118h1v3h-1zM230 117h1v1h-1zM230 121h1v1h-1zM237 118h1v3h-1zM238 117h1v1h-1zM238 121h1v1h-1zM245 118h1v3h-1zM246 117h1v1h-1zM246 121h1v1h-1zM253 118h1v3h-1zM254 117h1v1h-1zM254 121h1v1h-1zM261 118h1v3h-1zM262 117h1v1h-1zM262 121h1v1h-1zM269 118h1v3h-1zM270 117h1v1h-1zM270 121h1v1h-1zM277 118h1v3h-1zM278 117h1v1h-1zM278 121h1v1h-1zM285 118h1v3h-1zM286 117h1v1h-1zM286 121h1v1h-1zM293 118h1v3h-1zM294 117h1v1h-1zM294 121h1v1h-1zM301 118h1v3h-1zM302 117h1v1h-1zM302 121h1v1h-1zM309 118h1v3h-1zM310 117h1v1h-1zM310 121h1v1h-1zM317 118h1v3h-1zM318 117h1v1h-1zM318 121h1v1h-1zM325 118h1v3h-1zM326 117h1v1h-1zM326 121h1v1h-1zM333 118h1v3h-1zM334 117h1v1h-1zM334 121h1v1h-1zM341 118h1v3h-1zM342 117h1v1h-1zM342 121h1v1h-1zM349 118h1v3h-1zM350 117h1v1h-1zM350 121h1v1h-1zM357 118h1v3h-1zM358 117h1v1h-1zM358 121h1v1h-1zM365 118h1v3h-1zM366 117h1v1h-1zM366 121h1v1h-1zM373 118h1v3h-1zM374 117h1v1h-1zM374 121h1v1h-1zM381 118h1v3h-1zM382 117h1v1h-1zM382 121h1v1h-1zM389 118h1v3h-1zM390 117h1v1h-1zM390 121h1v1h-1zM397 118h1v3h-1zM398 117h1v1h-1zM398 121h1v1h-1zM405 118h1v3h-1zM406 117h1v1h-1zM406 121h1v1h-1zM413 118h1v3h-1zM414 117h1v1h-1zM414 121h1v1h-1zM421 118h1v3h-1zM422 117h1v1h-1zM422 121h1v1h-1zM429 118h1v3h-1zM430 117h1v1h-1zM430 121h1v1h-1zM437 118h1v3h-1zM438 117h1v1h-1zM438 121h1v1h-1zM445 118h1v3h-1zM446 117h1v1h-1zM446 121h1v1h-1zM453 118h1v3h-1zM454 117h1v1h-1zM454 121h1v1h-1zM461 118h1v3h-1zM462 117h1v1h-1zM462 121h1v1h-1zM469 118h1v3h-1zM470 117h1v1h-1zM470 121h1v1h-1zM477 118h1v3h-1zM478 117h1v1h-1zM478 121h1v1h-1zM485 118h1v3h-1zM486 117h1v1h-1zM486 121h1v1h-1zM493 118h1v3h-1zM494 117h1v1h-1zM494 121h1v1h-1zM501 118h1v3h-1zM502 117h1v1h-1zM502 121h1v1h-1zM509 118h1v3h-1zM510 117h1v1h-1zM510 121h1v1h-1zM517 118h1v3h-1zM518 117h1v1h-1zM518 121h1v1h-1zM525 118h1v3h-1zM526 117h1v1h-1zM526 121h1v1h-1zM533 118h1v3h-1zM534 117h1v1h-1zM534 121h1v1h-1zM541 118h1v3h-1zM542 117h1v1h-1zM542 121h1v1h-1zM549 118h1v3h-1zM550 117h1v1h-1zM550 121h1v1h-1zM557 118h1v3h-1zM558 117h1v1h-1zM558 121h1v1h-1zM565 118h1v3h-1zM566 117h1v1h-1zM566 121h1v1h-1zM573 118h1v3h-1zM574 117h1v1h-1zM574 121h1v1h-1zM581 118h1v3h-1zM582 117h1v1h-1zM582 121h1v1h-1zM589 118h1v3h-1zM590 117h1v1h-1zM590 121h1v1h-1zM597 118h1v3h-1zM598 117h1v1h-1zM598 121h1v1h-1zM605 118h1v3h-1zM606 117h1v1h-1zM606 121h1v1h-1zM613 118h1v3h-1zM614 117h1v1h-1zM614 121h1v1h-1zM621 118h1v3h-1zM622 117h1v1h-1zM622 121h1v1h-1zM629 118h1v3h-1zM630 117h1v1h-1zM630 121h1v1h-1zM637 118h1v3h-1zM638 117h1v1h-1zM638 121h1v1h-1zM645 118h1v3h-1zM646 117h1v1h-1zM646 121h1v1h-1zM653 118h1v3h-1zM654 117h1v1h-1zM654 121h1v1h-1zM661 118h1v3h-1zM662 117h1v1h-1zM662 121h1v1h-1zM669 118h1v3h-1zM670 117h1v1h-1zM670 121h1v1h-1zM677 118h1v3h-1zM678 117h1v1h-1zM678 121h1v1h-1zM685 118h1v3h-1zM686 117h1v1h-1zM686 121h1v1h-1zM693 118h1v3h-1zM694 117h1v1h-1zM694 121h1v1h-1zM701 118h1v3h-1zM702 117h1v1h-1zM702 121h1v1h-1zM709 118h1v3h-1zM710 117h1v1h-1zM710 121h1v1h-1zM717 118h1v3h-1zM718 117h1v1h-1zM718 121h1v1h-1zM725 118h1v3h-1zM726 117h1v1h-1zM726 121h1v1h-1zM733 118h1v3h-1zM734 117h1v1h-1zM734 121h1v1h-1zM741 118h1v3h-1zM742 117h1v1h-1zM742 121h1v1h-1zM749 118h1v3h-1zM750 117h1v1h-1zM750 121h1v1h-1zM757 118h1v3h-1zM758 117h1v1h-1zM758 121h1v1h-1zM765 118h1v3h-1zM766 117h1v1h-1zM766 121h1v1h-1zM773 118h1v3h-1zM774 117h1v1h-1zM774 121h1v1h-1zM781 118h1v3h-1zM782 117h1v1h-1zM782 121h1v1h-1zM789 118h1v3h-1zM790 117h1v1h-1zM790 121h1v1h-1zM797 118h1v3h-1zM798 117h1v1h-1zM798 121h1v1h-1zM805 118h1v3h-1zM806 117h1v1h-1zM806 121h1v1h-1zM813 118h1v3h-1zM814 117h1v1h-1zM814 121h1v1h-1zM821 118h1v3h-1zM822 117h1v1h-1zM822 121h1v1h-1zM829 118h1v3h-1zM830 117h1v1h-1zM830 121h1v1h-1zM837 118h1v3h-1zM838 117h1v1h-1zM838 121h1v1h-1zM845 118h1v3h-1zM846 117h1v1h-1zM846 121h1v1h-1zM853 118h1v3h-1zM854 117h1v1h-1zM854 121h1v1h-1zM861 118h1v3h-1zM862 117h1v1h-1zM862 121h1v1h-1zM869 118h1v3h-1zM870 117h1v1h-1zM870 121h1v1h-1zM877 118h1v3h-1zM878 117h1v1h-1zM878 121h1v1h-1zM885 118h1v3h-1zM886 117h1v1h-1zM886 121h1v1h-1zM893 118h1v3h-1zM894 117h1v1h-1zM894 121h1v1h-1zM901 118h1v3h-1zM902 117h1v1h-1zM902 121h1v1h-1zM909 118h1v3h-1zM910 117h1v1h-1zM910 121h1v1h-1zM917 118h1v3h-1zM918 117h1v1h-1zM918 121h1v1h-1zM925 118h1v3h-1zM926 117h1v1h-1zM926 121h1v1h-1zM933 118h1v3h-1zM934 117h1v1h-1zM934 121h1v1h-1zM941 118h1v3h-1zM942 117h1v1h-1zM942 121h1v1h-1z" fill="#0c0c78"/>
<path d="M159 116h1v1h-1zM159 122h1v1h-1zM156 119h1v1h-1zM167 116h1v1h-1zM167 122h1v1h-1zM164 119h1v1h-1zM175 116h1v1h-1zM175 122h1v1h-1zM172 119h1v1h-1zM183 116h1v1h-1zM183 122h1v1h-1zM180 119h1v1h-1zM191 116h1v1h-1zM191 122h1v1h-1zM188 119h1v1h-1zM199 116h1v1h-1zM199 122h1v1h-1zM196 119h1v1h-1zM207 116h1v1h-1zM207 122h1v1h-1zM204 119h1v1h-1zM215 116h1v1h-1zM215 122h1v1h-1zM212 119h1v1h-1zM223 116h1v1h-1zM223 122h1v1h-1zM220 119h1v1h-1zM231 116h1v1h-1zM231 122h1v1h-1zM228 119h1v1h-1zM239 116h1v1h-1zM239 122h1v1h-1zM236 119h1v1h-1zM247 116h1v1h-1zM247 122h1v1h-1zM244 119h1v1h-1zM255 116h1v1h-1zM255 122h1v1h-1zM252 119h1v1h-1zM263 116h1v1h-1zM263 122h1v1h-1zM260 119h1v1h-1zM271 116h1v1h-1zM271 122h1v1h-1zM268 119h1v1h-1zM279 116h1v1h-1zM279 122h1v1h-1zM276 119h1v1h-1zM287 116h1v1h-1zM287 122h1v1h-1zM284 119h1v1h-1zM295 116h1v1h-1zM295 122h1v1h-1zM292 119h1v1h-1zM303 116h1v1h-1zM303 122h1v1h-1zM300 119h1v1h-1zM311 116h1v1h-1zM311 122h1v1h-1zM308 119h1v1h-1zM319 116h1v1h-1zM319 122h1v1h-1zM316 119h1v1h-1zM327 116h1v1h-1zM327 122h1v1h-1zM324 119h1v1h-1zM335 116h1v1h-1zM335 122h1v1h-1zM332 119h1v1h-1zM343 116h1v1h-1zM343 122h1v1h-1zM340 119h1v1h-1zM351 116h1v1h-1zM351 122h1v1h-1zM348 119h1v1h-1zM359 116h1v1h-1zM359 122h1v1h-1zM356 119h1v1h-1zM367 116h1v1h-1zM367 122h1v1h-1zM364 119h1v1h-1zM375 116h1v1h-1zM375 122h1v1h-1zM372 119h1v1h-1zM383 116h1v1h-1zM383 122h1v1h-1zM380 119h1v1h-1zM391 116h1v1h-1zM391 122h1v1h-1zM388 119h1v1h-1zM399 116h1v1h-1zM399 122h1v1h-1zM396 119h1v1h-1zM407 116h1v1h-1zM407 122h1v1h-1zM404 119h1v1h-1zM415 116h1v1h-1zM415 122h1v1h-1zM412 119h1v1h-1zM423 116h1v1h-1zM423 122h1v1h-1zM420 119h1v1h-1zM431 116h1v1h-1zM431 122h1v1h-1zM428 119h1v1h-1zM439 116h1v1h-1zM439 122h1v1h-1zM436 119h1v1h-1zM447 116h1v1h-1zM447 122h1v1h-1zM444 119h1v1h-1zM455 116h1v1h-1zM455 122h1v1h-1zM452 119h1v1h-1zM463 116h1v1h-1zM463 122h1v1h-1zM460 119h1v1h-1zM471 116h1v1h-1zM471 122h1v1h-1zM468 119h1v1h-1zM479 116h1v1h-1zM479 122h1v1h-1zM476 119h1v1h-1zM487 116h1v1h-1zM487 122h1v1h-1zM484 119h1v1h-1zM495 116h1v1h-1zM495 122h1v1h-1zM492 119h1v1h-1zM503 116h1v1h-1zM503 122h1v1h-1zM500 119h1v1h-1zM511 116h1v1h-1zM511 122h1v1h-1zM508 119h1v1h-1zM519 116h1v1h-1zM519 122h1v1h-1zM516 119h1v1h-1zM527 116h1v1h-1zM527 122h1v1h-1zM524 119h1v1h-1zM535 116h1v1h-1zM535 122h1v1h-1zM532 119h1v1h-1zM543 116h1v1h-1zM543 122h1v1h-1zM540 119h1v1h-1zM551 116h1v1h-1zM551 122h1v1h-1zM548 119h1v1h-1zM559 116h1v1h-1zM559 122h1v1h-1zM556 119h1v1h-1zM567 116h1v1h-1zM567 122h1v1h-1zM564 119h1v1h-1zM575 116h1v1h-1zM575 122h1v1h-1zM572 119h1v1h-1zM583 116h1v1h-1zM583 122h1v1h-1zM580 119h1v1h-1zM591 116h1v1h-1zM591 122h1v1h-1zM588 119h1v1h-1zM599 116h1v1h-1zM599 122h1v1h-1zM596 119h1v1h-1zM607 116h1v1h-1zM607 122h1v1h-1zM604 119h1v1h-1zM615 116h1v1h-1zM615 122h1v1h-1zM612 119h1v1h-1zM623 116h1v1h-1zM623 122h1v1h-1zM620 119h1v1h-1zM631 116h1v1h-1zM631 122h1v1h-1zM628 119h1v1h-1zM639 116h1v1h-1zM639 122h1v1h-1zM636 119h1v1h-1zM647 116h1v1h-1zM647 122h1v1h-1zM644 119h1v1h-1zM655 116h1v1h-1zM655 122h1v1h-1zM652 119h1v1h-1zM663 116h1v1h-1zM663 122h1v1h-1zM660 119h1v1h-1zM671 116h1v1h-1zM671 122h1v1h-1zM668 119h1v1h-1zM679 116h1v1h-1zM679 122h1v1h-1zM676 119h1v1h-1zM687 116h1v1h-1zM687 122h1v1h-1zM684 119h1v1h-1zM695 116h1v1h-1zM695 122h1v1h-1zM692 119h1v1h-1zM703 116h1v1h-1zM703 122h1v1h-1zM700 119h1v1h-1zM711 116h1v1h-1zM711 122h1v1h-1zM708 119h1v1h-1zM719 116h1v1h-1zM719 122h1v1h-1zM716 119h1v1h-1zM727 116h1v1h-1zM727 122h1v1h-1zM724 119h1v1h-1zM735 116h1v1h-1zM735 122h1v1h-1zM732 119h1v1h-1zM743 116h1v1h-1zM743 122h1v1h-1zM740 119h1v1h-1zM751 116h1v1h-1zM751 122h1v1h-1zM748 119h1v1h-1zM759 116h1v1h-1zM759 122h1v1h-1zM756 119h1v1h-1zM767 116h1v1h-1zM767 122h1v1h-1zM764 119h1v1h-1zM775 116h1v1h-1zM775 122h1v1h-1zM772 119h1v1h-1zM783 116h1v1h-1zM783 122h1v1h-1zM780 119h1v1h-1zM791 116h1v1h-1zM791 122h1v1h-1zM788 119h1v1h-1zM799 116h1v1h-1zM799 122h1v1h-1zM796 119h1v1h-1zM807 116h1v1h-1zM807 122h1v1h-1zM804 119h1v1h-1zM815 116h1v1h-1zM815 122h1v1h-1zM812 119h1v1h-1zM823 116h1v1h-1zM823 122h1v1h-1zM820 119h1v1h-1zM831 116h1v1h-1zM831 122h1v1h-1zM828 119h1v1h-1zM839 116h1v1h-1zM839 122h1v1h-1zM836 119h1v1h-1zM847 116h1v1h-1zM847 122h1v1h-1zM844 119h1v1h-1zM855 116h1v1h-1zM855 122h1v1h-1zM852 119h1v1h-1zM863 116h1v1h-1zM863 122h1v1h-1zM860 119h1v1h-1zM871 116h1v1h-1zM871 122h1v1h-1zM868 119h1v1h-1zM879 116h1v1h-1zM879 122h1v1h-1zM876 119h1v1h-1zM887 116h1v1h-1zM887 122h1v1h-1zM884 119h1v1h-1zM895 116h1v1h-1zM895 122h1v1h-1zM892 119h1v1h-1zM903 116h1v1h-1zM903 122h1v1h-1zM900 119h1v1h-1zM911 116h1v1h-1zM911 122h1v1h-1zM908 119h1v1h-1zM919 116h1v1h-1zM919 122h1v1h-1zM916 119h1v1h-1zM927 116h1v1h-1zM927 122h1v1h-1zM924 119h1v1h-1zM935 116h1v1h-1zM935 122h1v1h-1zM932 119h1v1h-1zM943 116h1v1h-1zM943 122h1v1h-1zM940 119h1v1h-1z" fill="#0c0c78" fill-opacity="0.55"/>
<text transform="translate(109.70 140) scale(0.9492 1.0)" font-size="13.75" fill="#0c0c78" stroke="#0c0c78" stroke-width="0.18" text-anchor="start" xml:space="preserve">THAP4</text>
<path d="M157 135h792v1h-792zM157 134h1v3h-1zM158 133h1v1h-1zM158 137h1v1h-1zM165 134h1v3h-1zM166 133h1v1h-1zM166 137h1v1h-1zM173 134h1v3h-1zM174 133h1v1h-1zM174 137h1v1h-1zM181 134h1v3h-1zM182 133h1v1h-1zM182 137h1v1h-1zM189 134h1v3h-1zM190 133h1v1h-1zM190 137h1v1h-1zM197 134h1v3h-1zM198 133h1v1h-1zM198 137h1v1h-1zM205 134h1v3h-1zM206 133h1v1h-1zM206 137h1v1h-1zM213 134h1v3h-1zM214 133h1v1h-1zM214 137h1v1h-1zM221 134h1v3h-1zM222 133h1v1h-1zM222 137h1v1h-1zM229 134h1v3h-1zM230 133h1v1h-1zM230 137h1v1h-1zM237 134h1v3h-1zM238 133h1v1h-1zM238 137h1v1h-1zM245 134h1v3h-1zM246 133h1v1h-1zM246 137h1v1h-1zM253 134h1v3h-1zM254 133h1v1h-1zM254 137h1v1h-1zM261 134h1v3h-1zM262 133h1v1h-1zM262 137h1v1h-1zM269 134h1v3h-1zM270 133h1v1h-1zM270 137h1v1h-1zM277 134h1v3h-1zM278 133h1v1h-1zM278 137h1v1h-1zM285 134h1v3h-1zM286 133h1v1h-1zM286 137h1v1h-1zM293 134h1v3h-1zM294 133h1v1h-1zM294 137h1v1h-1zM301 134h1v3h-1zM302 133h1v1h-1zM302 137h1v1h-1zM309 134h1v3h-1zM310 133h1v1h-1zM310 137h1v1h-1zM317 134h1v3h-1zM318 133h1v1h-1zM318 137h1v1h-1zM325 134h1v3h-1zM326 133h1v1h-1zM326 137h1v1h-1zM333 134h1v3h-1zM334 133h1v1h-1zM334 137h1v1h-1zM341 134h1v3h-1zM342 133h1v1h-1zM342 137h1v1h-1zM349 134h1v3h-1zM350 133h1v1h-1zM350 137h1v1h-1zM357 134h1v3h-1zM358 133h1v1h-1zM358 137h1v1h-1zM365 134h1v3h-1zM366 133h1v1h-1zM366 137h1v1h-1zM373 134h1v3h-1zM374 133h1v1h-1zM374 137h1v1h-1zM381 134h1v3h-1zM382 133h1v1h-1zM382 137h1v1h-1zM389 134h1v3h-1zM390 133h1v1h-1zM390 137h1v1h-1zM397 134h1v3h-1zM398 133h1v1h-1zM398 137h1v1h-1zM405 134h1v3h-1zM406 133h1v1h-1zM406 137h1v1h-1zM413 134h1v3h-1zM414 133h1v1h-1zM414 137h1v1h-1zM421 134h1v3h-1zM422 133h1v1h-1zM422 137h1v1h-1zM429 134h1v3h-1zM430 133h1v1h-1zM430 137h1v1h-1zM437 134h1v3h-1zM438 133h1v1h-1zM438 137h1v1h-1zM445 134h1v3h-1zM446 133h1v1h-1zM446 137h1v1h-1zM453 134h1v3h-1zM454 133h1v1h-1zM454 137h1v1h-1zM461 134h1v3h-1zM462 133h1v1h-1zM462 137h1v1h-1zM469 134h1v3h-1zM470 133h1v1h-1zM470 137h1v1h-1zM477 134h1v3h-1zM478 133h1v1h-1zM478 137h1v1h-1zM485 134h1v3h-1zM486 133h1v1h-1zM486 137h1v1h-1zM493 134h1v3h-1zM494 133h1v1h-1zM494 137h1v1h-1zM501 134h1v3h-1zM502 133h1v1h-1zM502 137h1v1h-1zM509 134h1v3h-1zM510 133h1v1h-1zM510 137h1v1h-1zM517 134h1v3h-1zM518 133h1v1h-1zM518 137h1v1h-1zM525 134h1v3h-1zM526 133h1v1h-1zM526 137h1v1h-1zM533 134h1v3h-1zM534 133h1v1h-1zM534 137h1v1h-1zM541 134h1v3h-1zM542 133h1v1h-1zM542 137h1v1h-1zM549 134h1v3h-1zM550 133h1v1h-1zM550 137h1v1h-1zM557 134h1v3h-1zM558 133h1v1h-1zM558 137h1v1h-1zM565 134h1v3h-1zM566 133h1v1h-1zM566 137h1v1h-1zM573 134h1v3h-1zM574 133h1v1h-1zM574 137h1v1h-1zM581 134h1v3h-1zM582 133h1v1h-1zM582 137h1v1h-1zM589 134h1v3h-1zM590 133h1v1h-1zM590 137h1v1h-1zM597 134h1v3h-1zM598 133h1v1h-1zM598 137h1v1h-1zM605 134h1v3h-1zM606 133h1v1h-1zM606 137h1v1h-1zM613 134h1v3h-1zM614 133h1v1h-1zM614 137h1v1h-1zM621 134h1v3h-1zM622 133h1v1h-1zM622 137h1v1h-1zM629 134h1v3h-1zM630 133h1v1h-1zM630 137h1v1h-1zM637 134h1v3h-1zM638 133h1v1h-1zM638 137h1v1h-1zM645 134h1v3h-1zM646 133h1v1h-1zM646 137h1v1h-1zM653 134h1v3h-1zM654 133h1v1h-1zM654 137h1v1h-1zM661 134h1v3h-1zM662 133h1v1h-1zM662 137h1v1h-1zM669 134h1v3h-1zM670 133h1v1h-1zM670 137h1v1h-1zM677 134h1v3h-1zM678 133h1v1h-1zM678 137h1v1h-1zM685 134h1v3h-1zM686 133h1v1h-1zM686 137h1v1h-1zM693 134h1v3h-1zM694 133h1v1h-1zM694 137h1v1h-1zM701 134h1v3h-1zM702 133h1v1h-1zM702 137h1v1h-1zM709 134h1v3h-1zM710 133h1v1h-1zM710 137h1v1h-1zM717 134h1v3h-1zM718 133h1v1h-1zM718 137h1v1h-1zM725 134h1v3h-1zM726 133h1v1h-1zM726 137h1v1h-1zM733 134h1v3h-1zM734 133h1v1h-1zM734 137h1v1h-1zM741 134h1v3h-1zM742 133h1v1h-1zM742 137h1v1h-1zM749 134h1v3h-1zM750 133h1v1h-1zM750 137h1v1h-1zM757 134h1v3h-1zM758 133h1v1h-1zM758 137h1v1h-1zM765 134h1v3h-1zM766 133h1v1h-1zM766 137h1v1h-1zM773 134h1v3h-1zM774 133h1v1h-1zM774 137h1v1h-1zM781 134h1v3h-1zM782 133h1v1h-1zM782 137h1v1h-1zM789 134h1v3h-1zM790 133h1v1h-1zM790 137h1v1h-1zM797 134h1v3h-1zM798 133h1v1h-1zM798 137h1v1h-1zM805 134h1v3h-1zM806 133h1v1h-1zM806 137h1v1h-1zM813 134h1v3h-1zM814 133h1v1h-1zM814 137h1v1h-1zM821 134h1v3h-1zM822 133h1v1h-1zM822 137h1v1h-1zM829 134h1v3h-1zM830 133h1v1h-1zM830 137h1v1h-1zM837 134h1v3h-1zM838 133h1v1h-1zM838 137h1v1h-1zM845 134h1v3h-1zM846 133h1v1h-1zM846 137h1v1h-1zM853 134h1v3h-1zM854 133h1v1h-1zM854 137h1v1h-1zM861 134h1v3h-1zM862 133h1v1h-1zM862 137h1v1h-1zM869 134h1v3h-1zM870 133h1v1h-1zM870 137h1v1h-1zM877 134h1v3h-1zM878 133h1v1h-1zM878 137h1v1h-1zM885 134h1v3h-1zM886 133h1v1h-1zM886 137h1v1h-1zM893 134h1v3h-1zM894 133h1v1h-1zM894 137h1v1h-1zM901 134h1v3h-1zM902 133h1v1h-1zM902 137h1v1h-1zM909 134h1v3h-1zM910 133h1v1h-1zM910 137h1v1h-1zM917 134h1v3h-1zM918 133h1v1h-1zM918 137h1v1h-1zM925 134h1v3h-1zM926 133h1v1h-1zM926 137h1v1h-1zM933 134h1v3h-1zM934 133h1v1h-1zM934 137h1v1h-1zM941 134h1v3h-1zM942 133h1v1h-1zM942 137h1v1h-1z" fill="#0c0c78"/>
<path d="M159 132h1v1h-1zM159 138h1v1h-1zM156 135h1v1h-1zM167 132h1v1h-1zM167 138h1v1h-1zM164 135h1v1h-1zM175 132h1v1h-1zM175 138h1v1h-1zM172 135h1v1h-1zM183 132h1v1h-1zM183 138h1v1h-1zM180 135h1v1h-1zM191 132h1v1h-1zM191 138h1v1h-1zM188 135h1v1h-1zM199 132h1v1h-1zM199 138h1v1h-1zM196 135h1v1h-1zM207 132h1v1h-1zM207 138h1v1h-1zM204 135h1v1h-1zM215 132h1v1h-1zM215 138h1v1h-1zM212 135h1v1h-1zM223 132h1v1h-1zM223 138h1v1h-1zM220 135h1v1h-1zM231 132h1v1h-1zM231 138h1v1h-1zM228 135h1v1h-1zM239 132h1v1h-1zM239 138h1v1h-1zM236 135h1v1h-1zM247 132h1v1h-1zM247 138h1v1h-1zM244 135h1v1h-1zM255 132h1v1h-1zM255 138h1v1h-1zM252 135h1v1h-1zM263 132h1v1h-1zM263 138h1v1h-1zM260 135h1v1h-1zM271 132h1v1h-1zM271 138h1v1h-1zM268 135h1v1h-1zM279 132h1v1h-1zM279 138h1v1h-1zM276 135h1v1h-1zM287 132h1v1h-1zM287 138h1v1h-1zM284 135h1v1h-1zM295 132h1v1h-1zM295 138h1v1h-1zM292 135h1v1h-1zM303 132h1v1h-1zM303 138h1v1h-1zM300 135h1v1h-1zM311 132h1v1h-1zM311 138h1v1h-1zM308 135h1v1h-1zM319 132h1v1h-1zM319 138h1v1h-1zM316 135h1v1h-1zM327 132h1v1h-1zM327 138h1v1h-1zM324 135h1v1h-1zM335 132h1v1h-1zM335 138h1v1h-1zM332 135h1v1h-1zM343 132h1v1h-1zM343 138h1v1h-1zM340 135h1v1h-1zM351 132h1v1h-1zM351 138h1v1h-1zM348 135h1v1h-1zM359 132h1v1h-1zM359 138h1v1h-1zM356 135h1v1h-1zM367 132h1v1h-1zM367 138h1v1h-1zM364 135h1v1h-1zM375 132h1v1h-1zM375 138h1v1h-1zM372 135h1v1h-1zM383 132h1v1h-1zM383 138h1v1h-1zM380 135h1v1h-1zM391 132h1v1h-1zM391 138h1v1h-1zM388 135h1v1h-1zM399 132h1v1h-1zM399 138h1v1h-1zM396 135h1v1h-1zM407 132h1v1h-1zM407 138h1v1h-1zM404 135h1v1h-1zM415 132h1v1h-1zM415 138h1v1h-1zM412 135h1v1h-1zM423 132h1v1h-1zM423 138h1v1h-1zM420 135h1v1h-1zM431 132h1v1h-1zM431 138h1v1h-1zM428 135h1v1h-1zM439 132h1v1h-1zM439 138h1v1h-1zM436 135h1v1h-1zM447 132h1v1h-1zM447 138h1v1h-1zM444 135h1v1h-1zM455 132h1v1h-1zM455 138h1v1h-1zM452 135h1v1h-1zM463 132h1v1h-1zM463 138h1v1h-1zM460 135h1v1h-1zM471 132h1v1h-1zM471 138h1v1h-1zM468 135h1v1h-1zM479 132h1v1h-1zM479 138h1v1h-1zM476 135h1v1h-1zM487 132h1v1h-1zM487 138h1v1h-1zM484 135h1v1h-1zM495 132h1v1h-1zM495 138h1v1h-1zM492 135h1v1h-1zM503 132h1v1h-1zM503 138h1v1h-1zM500 135h1v1h-1zM511 132h1v1h-1zM511 138h1v1h-1zM508 135h1v1h-1zM519 132h1v1h-1zM519 138h1v1h-1zM516 135h1v1h-1zM527 132h1v1h-1zM527 138h1v1h-1zM524 135h1v1h-1zM535 132h1v1h-1zM535 138h1v1h-1zM532 135h1v1h-1zM543 132h1v1h-1zM543 138h1v1h-1zM540 135h1v1h-1zM551 132h1v1h-1zM551 138h1v1h-1zM548 135h1v1h-1zM559 132h1v1h-1zM559 138h1v1h-1zM556 135h1v1h-1zM567 132h1v1h-1zM567 138h1v1h-1zM564 135h1v1h-1zM575 132h1v1h-1zM575 138h1v1h-1zM572 135h1v1h-1zM583 132h1v1h-1zM583 138h1v1h-1zM580 135h1v1h-1zM591 132h1v1h-1zM591 138h1v1h-1zM588 135h1v1h-1zM599 132h1v1h-1zM599 138h1v1h-1zM596 135h1v1h-1zM607 132h1v1h-1zM607 138h1v1h-1zM604 135h1v1h-1zM615 132h1v1h-1zM615 138h1v1h-1zM612 135h1v1h-1zM623 132h1v1h-1zM623 138h1v1h-1zM620 135h1v1h-1zM631 132h1v1h-1zM631 138h1v1h-1zM628 135h1v1h-1zM639 132h1v1h-1zM639 138h1v1h-1zM636 135h1v1h-1zM647 132h1v1h-1zM647 138h1v1h-1zM644 135h1v1h-1zM655 132h1v1h-1zM655 138h1v1h-1zM652 135h1v1h-1zM663 132h1v1h-1zM663 138h1v1h-1zM660 135h1v1h-1zM671 132h1v1h-1zM671 138h1v1h-1zM668 135h1v1h-1zM679 132h1v1h-1zM679 138h1v1h-1zM676 135h1v1h-1zM687 132h1v1h-1zM687 138h1v1h-1zM684 135h1v1h-1zM695 132h1v1h-1zM695 138h1v1h-1zM692 135h1v1h-1zM703 132h1v1h-1zM703 138h1v1h-1zM700 135h1v1h-1zM711 132h1v1h-1zM711 138h1v1h-1zM708 135h1v1h-1zM719 132h1v1h-1zM719 138h1v1h-1zM716 135h1v1h-1zM727 132h1v1h-1zM727 138h1v1h-1zM724 135h1v1h-1zM735 132h1v1h-1zM735 138h1v1h-1zM732 135h1v1h-1zM743 132h1v1h-1zM743 138h1v1h-1zM740 135h1v1h-1zM751 132h1v1h-1zM751 138h1v1h-1zM748 135h1v1h-1zM759 132h1v1h-1zM759 138h1v1h-1zM756 135h1v1h-1zM767 132h1v1h-1zM767 138h1v1h-1zM764 135h1v1h-1zM775 132h1v1h-1zM775 138h1v1h-1zM772 135h1v1h-1zM783 132h1v1h-1zM783 138h1v1h-1zM780 135h1v1h-1zM791 132h1v1h-1zM791 138h1v1h-1zM788 135h1v1h-1zM799 132h1v1h-1zM799 138h1v1h-1zM796 135h1v1h-1zM807 132h1v1h-1zM807 138h1v1h-1zM804 135h1v1h-1zM815 132h1v1h-1zM815 138h1v1h-1zM812 135h1v1h-1zM823 132h1v1h-1zM823 138h1v1h-1zM820 135h1v1h-1zM831 132h1v1h-1zM831 138h1v1h-1zM828 135h1v1h-1zM839 132h1v1h-1zM839 138h1v1h-1zM836 135h1v1h-1zM847 132h1v1h-1zM847 138h1v1h-1zM844 135h1v1h-1zM855 132h1v1h-1zM855 138h1v1h-1zM852 135h1v1h-1zM863 132h1v1h-1zM863 138h1v1h-1zM860 135h1v1h-1zM871 132h1v1h-1zM871 138h1v1h-1zM868 135h1v1h-1zM879 132h1v1h-1zM879 138h1v1h-1zM876 135h1v1h-1zM887 132h1v1h-1zM887 138h1v1h-1zM884 135h1v1h-1zM895 132h1v1h-1zM895 138h1v1h-1zM892 135h1v1h-1zM903 132h1v1h-1zM903 138h1v1h-1zM900 135h1v1h-1zM911 132h1v1h-1zM911 138h1v1h-1zM908 135h1v1h-1zM919 132h1v1h-1zM919 138h1v1h-1zM916 135h1v1h-1zM927 132h1v1h-1zM927 138h1v1h-1zM924 135h1v1h-1zM935 132h1v1h-1zM935 138h1v1h-1zM932 135h1v1h-1zM943 132h1v1h-1zM943 138h1v1h-1zM940 135h1v1h-1z" fill="#0c0c78" fill-opacity="0.55"/>
<text transform="translate(109.70 156) scale(0.9492 1.0)" font-size="13.75" fill="#146eaa" stroke="#146eaa" stroke-width="0.18" text-anchor="start" xml:space="preserve">THAP4</text>
<path d="M157 151h792v1h-792zM157 150h1v3h-1zM158 149h1v1h-1zM158 153h1v1h-1zM165 150h1v3h-1zM166 149h1v1h-1zM166 153h1v1h-1zM173 150h1v3h-1zM174 149h1v1h-1zM174 153h1v1h-1zM181 150h1v3h-1zM182 149h1v1h-1zM182 153h1v1h-1zM189 150h1v3h-1zM190 149h1v1h-1zM190 153h1v1h-1zM197 150h1v3h-1zM198 149h1v1h-1zM198 153h1v1h-1zM205 150h1v3h-1zM206 149h1v1h-1zM206 153h1v1h-1zM213 150h1v3h-1zM214 149h1v1h-1zM214 153h1v1h-1zM221 150h1v3h-1zM222 149h1v1h-1zM222 153h1v1h-1zM229 150h1v3h-1zM230 149h1v1h-1zM230 153h1v1h-1zM237 150h1v3h-1zM238 149h1v1h-1zM238 153h1v1h-1zM245 150h1v3h-1zM246 149h1v1h-1zM246 153h1v1h-1zM253 150h1v3h-1zM254 149h1v1h-1zM254 153h1v1h-1zM261 150h1v3h-1zM262 149h1v1h-1zM262 153h1v1h-1zM269 150h1v3h-1zM270 149h1v1h-1zM270 153h1v1h-1zM277 150h1v3h-1zM278 149h1v1h-1zM278 153h1v1h-1zM285 150h1v3h-1zM286 149h1v1h-1zM286 153h1v1h-1zM293 150h1v3h-1zM294 149h1v1h-1zM294 153h1v1h-1zM301 150h1v3h-1zM302 149h1v1h-1zM302 153h1v1h-1zM309 150h1v3h-1zM310 149h1v1h-1zM310 153h1v1h-1zM317 150h1v3h-1zM318 149h1v1h-1zM318 153h1v1h-1zM325 150h1v3h-1zM326 149h1v1h-1zM326 153h1v1h-1zM333 150h1v3h-1zM334 149h1v1h-1zM334 153h1v1h-1zM341 150h1v3h-1zM342 149h1v1h-1zM342 153h1v1h-1zM349 150h1v3h-1zM350 149h1v1h-1zM350 153h1v1h-1zM357 150h1v3h-1zM358 149h1v1h-1zM358 153h1v1h-1zM365 150h1v3h-1zM366 149h1v1h-1zM366 153h1v1h-1zM373 150h1v3h-1zM374 149h1v1h-1zM374 153h1v1h-1zM381 150h1v3h-1zM382 149h1v1h-1zM382 153h1v1h-1zM389 150h1v3h-1zM390 149h1v1h-1zM390 153h1v1h-1zM397 150h1v3h-1zM398 149h1v1h-1zM398 153h1v1h-1zM405 150h1v3h-1zM406 149h1v1h-1zM406 153h1v1h-1zM413 150h1v3h-1zM414 149h1v1h-1zM414 153h1v1h-1zM421 150h1v3h-1zM422 149h1v1h-1zM422 153h1v1h-1zM429 150h1v3h-1zM430 149h1v1h-1zM430 153h1v1h-1zM437 150h1v3h-1zM438 149h1v1h-1zM438 153h1v1h-1zM445 150h1v3h-1zM446 149h1v1h-1zM446 153h1v1h-1zM453 150h1v3h-1zM454 149h1v1h-1zM454 153h1v1h-1zM461 150h1v3h-1zM462 149h1v1h-1zM462 153h1v1h-1zM469 150h1v3h-1zM470 149h1v1h-1zM470 153h1v1h-1zM477 150h1v3h-1zM478 149h1v1h-1zM478 153h1v1h-1zM485 150h1v3h-1zM486 149h1v1h-1zM486 153h1v1h-1zM493 150h1v3h-1zM494 149h1v1h-1zM494 153h1v1h-1zM501 150h1v3h-1zM502 149h1v1h-1zM502 153h1v1h-1zM509 150h1v3h-1zM510 149h1v1h-1zM510 153h1v1h-1zM517 150h1v3h-1zM518 149h1v1h-1zM518 153h1v1h-1zM525 150h1v3h-1zM526 149h1v1h-1zM526 153h1v1h-1zM533 150h1v3h-1zM534 149h1v1h-1zM534 153h1v1h-1zM541 150h1v3h-1zM542 149h1v1h-1zM542 153h1v1h-1zM549 150h1v3h-1zM550 149h1v1h-1zM550 153h1v1h-1zM557 150h1v3h-1zM558 149h1v1h-1zM558 153h1v1h-1zM565 150h1v3h-1zM566 149h1v1h-1zM566 153h1v1h-1zM573 150h1v3h-1zM574 149h1v1h-1zM574 153h1v1h-1zM581 150h1v3h-1zM582 149h1v1h-1zM582 153h1v1h-1zM589 150h1v3h-1zM590 149h1v1h-1zM590 153h1v1h-1zM597 150h1v3h-1zM598 149h1v1h-1zM598 153h1v1h-1zM605 150h1v3h-1zM606 149h1v1h-1zM606 153h1v1h-1zM613 150h1v3h-1zM614 149h1v1h-1zM614 153h1v1h-1zM621 150h1v3h-1zM622 149h1v1h-1zM622 153h1v1h-1zM629 150h1v3h-1zM630 149h1v1h-1zM630 153h1v1h-1zM637 150h1v3h-1zM638 149h1v1h-1zM638 153h1v1h-1zM645 150h1v3h-1zM646 149h1v1h-1zM646 153h1v1h-1zM653 150h1v3h-1zM654 149h1v1h-1zM654 153h1v1h-1zM661 150h1v3h-1zM662 149h1v1h-1zM662 153h1v1h-1zM669 150h1v3h-1zM670 149h1v1h-1zM670 153h1v1h-1zM677 150h1v3h-1zM678 149h1v1h-1zM678 153h1v1h-1zM685 150h1v3h-1zM686 149h1v1h-1zM686 153h1v1h-1zM693 150h1v3h-1zM694 149h1v1h-1zM694 153h1v1h-1zM701 150h1v3h-1zM702 149h1v1h-1zM702 153h1v1h-1zM709 150h1v3h-1zM710 149h1v1h-1zM710 153h1v1h-1zM717 150h1v3h-1zM718 149h1v1h-1zM718 153h1v1h-1zM725 150h1v3h-1zM726 149h1v1h-1zM726 153h1v1h-1zM733 150h1v3h-1zM734 149h1v1h-1zM734 153h1v1h-1zM741 150h1v3h-1zM742 149h1v1h-1zM742 153h1v1h-1zM749 150h1v3h-1zM750 149h1v1h-1zM750 153h1v1h-1zM757 150h1v3h-1zM758 149h1v1h-1zM758 153h1v1h-1zM765 150h1v3h-1zM766 149h1v1h-1zM766 153h1v1h-1zM773 150h1v3h-1zM774 149h1v1h-1zM774 153h1v1h-1zM781 150h1v3h-1zM782 149h1v1h-1zM782 153h1v1h-1zM789 150h1v3h-1zM790 149h1v1h-1zM790 153h1v1h-1zM797 150h1v3h-1zM798 149h1v1h-1zM798 153h1v1h-1zM805 150h1v3h-1zM806 149h1v1h-1zM806 153h1v1h-1zM813 150h1v3h-1zM814 149h1v1h-1zM814 153h1v1h-1zM821 150h1v3h-1zM822 149h1v1h-1zM822 153h1v1h-1zM829 150h1v3h-1zM830 149h1v1h-1zM830 153h1v1h-1zM837 150h1v3h-1zM838 149h1v1h-1zM838 153h1v1h-1zM845 150h1v3h-1zM846 149h1v1h-1zM846 153h1v1h-1zM853 150h1v3h-1zM854 149h1v1h-1zM854 153h1v1h-1zM861 150h1v3h-1zM862 149h1v1h-1zM862 153h1v1h-1zM869 150h1v3h-1zM870 149h1v1h-1zM870 153h1v1h-1zM877 150h1v3h-1zM878 149h1v1h-1zM878 153h1v1h-1zM885 150h1v3h-1zM886 149h1v1h-1zM886 153h1v1h-1zM893 150h1v3h-1zM894 149h1v1h-1zM894 153h1v1h-1zM901 150h1v3h-1zM902 149h1v1h-1zM902 153h1v1h-1zM909 150h1v3h-1zM910 149h1v1h-1zM910 153h1v1h-1zM917 150h1v3h-1zM918 149h1v1h-1zM918 153h1v1h-1zM925 150h1v3h-1zM926 149h1v1h-1zM926 153h1v1h-1zM933 150h1v3h-1zM934 149h1v1h-1zM934 153h1v1h-1zM941 150h1v3h-1zM942 149h1v1h-1zM942 153h1v1h-1z" fill="#146eaa"/>
<path d="M159 148h1v1h-1zM159 154h1v1h-1zM156 151h1v1h-1zM167 148h1v1h-1zM167 154h1v1h-1zM164 151h1v1h-1zM175 148h1v1h-1zM175 154h1v1h-1zM172 151h1v1h-1zM183 148h1v1h-1zM183 154h1v1h-1zM180 151h1v1h-1zM191 148h1v1h-1zM191 154h1v1h-1zM188 151h1v1h-1zM199 148h1v1h-1zM199 154h1v1h-1zM196 151h1v1h-1zM207 148h1v1h-1zM207 154h1v1h-1zM204 151h1v1h-1zM215 148h1v1h-1zM215 154h1v1h-1zM212 151h1v1h-1zM223 148h1v1h-1zM223 154h1v1h-1zM220 151h1v1h-1zM231 148h1v1h-1zM231 154h1v1h-1zM228 151h1v1h-1zM239 148h1v1h-1zM239 154h1v1h-1zM236 151h1v1h-1zM247 148h1v1h-1zM247 154h1v1h-1zM244 151h1v1h-1zM255 148h1v1h-1zM255 154h1v1h-1zM252 151h1v1h-1zM263 148h1v1h-1zM263 154h1v1h-1zM260 151h1v1h-1zM271 148h1v1h-1zM271 154h1v1h-1zM268 151h1v1h-1zM279 148h1v1h-1zM279 154h1v1h-1zM276 151h1v1h-1zM287 148h1v1h-1zM287 154h1v1h-1zM284 151h1v1h-1zM295 148h1v1h-1zM295 154h1v1h-1zM292 151h1v1h-1zM303 148h1v1h-1zM303 154h1v1h-1zM300 151h1v1h-1zM311 148h1v1h-1zM311 154h1v1h-1zM308 151h1v1h-1zM319 148h1v1h-1zM319 154h1v1h-1zM316 151h1v1h-1zM327 148h1v1h-1zM327 154h1v1h-1zM324 151h1v1h-1zM335 148h1v1h-1zM335 154h1v1h-1zM332 151h1v1h-1zM343 148h1v1h-1zM343 154h1v1h-1zM340 151h1v1h-1zM351 148h1v1h-1zM351 154h1v1h-1zM348 151h1v1h-1zM359 148h1v1h-1zM359 154h1v1h-1zM356 151h1v1h-1zM367 148h1v1h-1zM367 154h1v1h-1zM364 151h1v1h-1zM375 148h1v1h-1zM375 154h1v1h-1zM372 151h1v1h-1zM383 148h1v1h-1zM383 154h1v1h-1zM380 151h1v1h-1zM391 148h1v1h-1zM391 154h1v1h-1zM388 151h1v1h-1zM399 148h1v1h-1zM399 154h1v1h-1zM396 151h1v1h-1zM407 148h1v1h-1zM407 154h1v1h-1zM404 151h1v1h-1zM415 148h1v1h-1zM415 154h1v1h-1zM412 151h1v1h-1zM423 148h1v1h-1zM423 154h1v1h-1zM420 151h1v1h-1zM431 148h1v1h-1zM431 154h1v1h-1zM428 151h1v1h-1zM439 148h1v1h-1zM439 154h1v1h-1zM436 151h1v1h-1zM447 148h1v1h-1zM447 154h1v1h-1zM444 151h1v1h-1zM455 148h1v1h-1zM455 154h1v1h-1zM452 151h1v1h-1zM463 148h1v1h-1zM463 154h1v1h-1zM460 151h1v1h-1zM471 148h1v1h-1zM471 154h1v1h-1zM468 151h1v1h-1zM479 148h1v1h-1zM479 154h1v1h-1zM476 151h1v1h-1zM487 148h1v1h-1zM487 154h1v1h-1zM484 151h1v1h-1zM495 148h1v1h-1zM495 154h1v1h-1zM492 151h1v1h-1zM503 148h1v1h-1zM503 154h1v1h-1zM500 151h1v1h-1zM511 148h1v1h-1zM511 154h1v1h-1zM508 151h1v1h-1zM519 148h1v1h-1zM519 154h1v1h-1zM516 151h1v1h-1zM527 148h1v1h-1zM527 154h1v1h-1zM524 151h1v1h-1zM535 148h1v1h-1zM535 154h1v1h-1zM532 151h1v1h-1zM543 148h1v1h-1zM543 154h1v1h-1zM540 151h1v1h-1zM551 148h1v1h-1zM551 154h1v1h-1zM548 151h1v1h-1zM559 148h1v1h-1zM559 154h1v1h-1zM556 151h1v1h-1zM567 148h1v1h-1zM567 154h1v1h-1zM564 151h1v1h-1zM575 148h1v1h-1zM575 154h1v1h-1zM572 151h1v1h-1zM583 148h1v1h-1zM583 154h1v1h-1zM580 151h1v1h-1zM591 148h1v1h-1zM591 154h1v1h-1zM588 151h1v1h-1zM599 148h1v1h-1zM599 154h1v1h-1zM596 151h1v1h-1zM607 148h1v1h-1zM607 154h1v1h-1zM604 151h1v1h-1zM615 148h1v1h-1zM615 154h1v1h-1zM612 151h1v1h-1zM623 148h1v1h-1zM623 154h1v1h-1zM620 151h1v1h-1zM631 148h1v1h-1zM631 154h1v1h-1zM628 151h1v1h-1zM639 148h1v1h-1zM639 154h1v1h-1zM636 151h1v1h-1zM647 148h1v1h-1zM647 154h1v1h-1zM644 151h1v1h-1zM655 148h1v1h-1zM655 154h1v1h-1zM652 151h1v1h-1zM663 148h1v1h-1zM663 154h1v1h-1zM660 151h1v1h-1zM671 148h1v1h-1zM671 154h1v1h-1zM668 151h1v1h-1zM679 148h1v1h-1zM679 154h1v1h-1zM676 151h1v1h-1zM687 148h1v1h-1zM687 154h1v1h-1zM684 151h1v1h-1zM695 148h1v1h-1zM695 154h1v1h-1zM692 151h1v1h-1zM703 148h1v1h-1zM703 154h1v1h-1zM700 151h1v1h-1zM711 148h1v1h-1zM711 154h1v1h-1zM708 151h1v1h-1zM719 148h1v1h-1zM719 154h1v1h-1zM716 151h1v1h-1zM727 148h1v1h-1zM727 154h1v1h-1zM724 151h1v1h-1zM735 148h1v1h-1zM735 154h1v1h-1zM732 151h1v1h-1zM743 148h1v1h-1zM743 154h1v1h-1zM740 151h1v1h-1zM751 148h1v1h-1zM751 154h1v1h-1zM748 151h1v1h-1zM759 148h1v1h-1zM759 154h1v1h-1zM756 151h1v1h-1zM767 148h1v1h-1zM767 154h1v1h-1zM764 151h1v1h-1zM775 148h1v1h-1zM775 154h1v1h-1zM772 151h1v1h-1zM783 148h1v1h-1zM783 154h1v1h-1zM780 151h1v1h-1zM791 148h1v1h-1zM791 154h1v1h-1zM788 151h1v1h-1zM799 148h1v1h-1zM799 154h1v1h-1zM796 151h1v1h-1zM807 148h1v1h-1zM807 154h1v1h-1zM804 151h1v1h-1zM815 148h1v1h-1zM815 154h1v1h-1zM812 151h1v1h-1zM823 148h1v1h-1zM823 154h1v1h-1zM820 151h1v1h-1zM831 148h1v1h-1zM831 154h1v1h-1zM828 151h1v1h-1zM839 148h1v1h-1zM839 154h1v1h-1zM836 151h1v1h-1zM847 148h1v1h-1zM847 154h1v1h-1zM844 151h1v1h-1zM855 148h1v1h-1zM855 154h1v1h-1zM852 151h1v1h-1zM863 148h1v1h-1zM863 154h1v1h-1zM860 151h1v1h-1zM871 148h1v1h-1zM871 154h1v1h-1zM868 151h1v1h-1zM879 148h1v1h-1zM879 154h1v1h-1zM876 151h1v1h-1zM887 148h1v1h-1zM887 154h1v1h-1zM884 151h1v1h-1zM895 148h1v1h-1zM895 154h1v1h-1zM892 151h1v1h-1zM903 148h1v1h-1zM903 154h1v1h-1zM900 151h1v1h-1zM911 148h1v1h-1zM911 154h1v1h-1zM908 151h1v1h-1zM919 148h1v1h-1zM919 154h1v1h-1zM916 151h1v1h-1zM927 148h1v1h-1zM927 154h1v1h-1zM924 151h1v1h-1zM935 148h1v1h-1zM935 154h1v1h-1zM932 151h1v1h-1zM943 148h1v1h-1zM943 154h1v1h-1zM940 151h1v1h-1z" fill="#146eaa" fill-opacity="0.55"/>
<text transform="translate(109.70 172) scale(0.9492 1.0)" font-size="13.75" fill="#0c0c78" stroke="#0c0c78" stroke-width="0.18" text-anchor="start" xml:space="preserve">THAP4</text>
<path d="M157 167h792v1h-792zM157 166h1v3h-1zM158 165h1v1h-1zM158 169h1v1h-1zM165 166h1v3h-1zM166 165h1v1h-1zM166 169h1v1h-1zM173 166h1v3h-1zM174 165h1v1h-1zM174 169h1v1h-1zM181 166h1v3h-1zM182 165h1v1h-1zM182 169h1v1h-1zM189 166h1v3h-1zM190 165h1v1h-1zM190 169h1v1h-1zM197 166h1v3h-1zM198 165h1v1h-1zM198 169h1v1h-1zM205 166h1v3h-1zM206 165h1v1h-1zM206 169h1v1h-1zM213 166h1v3h-1zM214 165h1v1h-1zM214 169h1v1h-1zM221 166h1v3h-1zM222 165h1v1h-1zM222 169h1v1h-1zM229 166h1v3h-1zM230 165h1v1h-1zM230 169h1v1h-1zM237 166h1v3h-1zM238 165h1v1h-1zM238 169h1v1h-1zM245 166h1v3h-1zM246 165h1v1h-1zM246 169h1v1h-1zM253 166h1v3h-1zM254 165h1v1h-1zM254 169h1v1h-1zM261 166h1v3h-1zM262 165h1v1h-1zM262 169h1v1h-1zM269 166h1v3h-1zM270 165h1v1h-1zM270 169h1v1h-1zM277 166h1v3h-1zM278 165h1v1h-1zM278 169h1v1h-1zM285 166h1v3h-1zM286 165h1v1h-1zM286 169h1v1h-1zM293 166h1v3h-1zM294 165h1v1h-1zM294 169h1v1h-1zM301 166h1v3h-1zM302 165h1v1h-1zM302 169h1v1h-1zM309 166h1v3h-1zM310 165h1v1h-1zM310 169h1v1h-1zM317 166h1v3h-1zM318 165h1v1h-1zM318 169h1v1h-1zM325 166h1v3h-1zM326 165h1v1h-1zM326 169h1v1h-1zM333 166h1v3h-1zM334 165h1v1h-1zM334 169h1v1h-1zM341 166h1v3h-1zM342 165h1v1h-1zM342 169h1v1h-1zM349 166h1v3h-1zM350 165h1v1h-1zM350 169h1v1h-1zM357 166h1v3h-1zM358 165h1v1h-1zM358 169h1v1h-1zM365 166h1v3h-1zM366 165h1v1h-1zM366 169h1v1h-1zM373 166h1v3h-1zM374 165h1v1h-1zM374 169h1v1h-1zM381 166h1v3h-1zM382 165h1v1h-1zM382 169h1v1h-1zM389 166h1v3h-1zM390 165h1v1h-1zM390 169h1v1h-1zM397 166h1v3h-1zM398 165h1v1h-1zM398 169h1v1h-1zM405 166h1v3h-1zM406 165h1v1h-1zM406 169h1v1h-1zM413 166h1v3h-1zM414 165h1v1h-1zM414 169h1v1h-1zM421 166h1v3h-1zM422 165h1v1h-1zM422 169h1v1h-1zM429 166h1v3h-1zM430 165h1v1h-1zM430 169h1v1h-1zM437 166h1v3h-1zM438 165h1v1h-1zM438 169h1v1h-1zM445 166h1v3h-1zM446 165h1v1h-1zM446 169h1v1h-1zM453 166h1v3h-1zM454 165h1v1h-1zM454 169h1v1h-1zM461 166h1v3h-1zM462 165h1v1h-1zM462 169h1v1h-1zM469 166h1v3h-1zM470 165h1v1h-1zM470 169h1v1h-1zM477 166h1v3h-1zM478 165h1v1h-1zM478 169h1v1h-1zM485 166h1v3h-1zM486 165h1v1h-1zM486 169h1v1h-1zM493 166h1v3h-1zM494 165h1v1h-1zM494 169h1v1h-1zM501 166h1v3h-1zM502 165h1v1h-1zM502 169h1v1h-1zM509 166h1v3h-1zM510 165h1v1h-1zM510 169h1v1h-1zM517 166h1v3h-1zM518 165h1v1h-1zM518 169h1v1h-1zM525 166h1v3h-1zM526 165h1v1h-1zM526 169h1v1h-1zM533 166h1v3h-1zM534 165h1v1h-1zM534 169h1v1h-1zM541 166h1v3h-1zM542 165h1v1h-1zM542 169h1v1h-1zM549 166h1v3h-1zM550 165h1v1h-1zM550 169h1v1h-1zM557 166h1v3h-1zM558 165h1v1h-1zM558 169h1v1h-1zM565 166h1v3h-1zM566 165h1v1h-1zM566 169h1v1h-1zM573 166h1v3h-1zM574 165h1v1h-1zM574 169h1v1h-1zM581 166h1v3h-1zM582 165h1v1h-1zM582 169h1v1h-1zM589 166h1v3h-1zM590 165h1v1h-1zM590 169h1v1h-1zM597 166h1v3h-1zM598 165h1v1h-1zM598 169h1v1h-1zM605 166h1v3h-1zM606 165h1v1h-1zM606 169h1v1h-1zM613 166h1v3h-1zM614 165h1v1h-1zM614 169h1v1h-1zM621 166h1v3h-1zM622 165h1v1h-1zM622 169h1v1h-1zM629 166h1v3h-1zM630 165h1v1h-1zM630 169h1v1h-1zM637 166h1v3h-1zM638 165h1v1h-1zM638 169h1v1h-1zM645 166h1v3h-1zM646 165h1v1h-1zM646 169h1v1h-1zM653 166h1v3h-1zM654 165h1v1h-1zM654 169h1v1h-1zM661 166h1v3h-1zM662 165h1v1h-1zM662 169h1v1h-1zM669 166h1v3h-1zM670 165h1v1h-1zM670 169h1v1h-1zM677 166h1v3h-1zM678 165h1v1h-1zM678 169h1v1h-1zM685 166h1v3h-1zM686 165h1v1h-1zM686 169h1v1h-1zM693 166h1v3h-1zM694 165h1v1h-1zM694 169h1v1h-1zM701 166h1v3h-1zM702 165h1v1h-1zM702 169h1v1h-1zM709 166h1v3h-1zM710 165h1v1h-1zM710 169h1v1h-1zM717 166h1v3h-1zM718 165h1v1h-1zM718 169h1v1h-1zM725 166h1v3h-1zM726 165h1v1h-1zM726 169h1v1h-1zM733 166h1v3h-1zM734 165h1v1h-1zM734 169h1v1h-1zM741 166h1v3h-1zM742 165h1v1h-1zM742 169h1v1h-1zM749 166h1v3h-1zM750 165h1v1h-1zM750 169h1v1h-1zM757 166h1v3h-1zM758 165h1v1h-1zM758 169h1v1h-1zM765 166h1v3h-1zM766 165h1v1h-1zM766 169h1v1h-1zM773 166h1v3h-1zM774 165h1v1h-1zM774 169h1v1h-1zM781 166h1v3h-1zM782 165h1v1h-1zM782 169h1v1h-1zM789 166h1v3h-1zM790 165h1v1h-1zM790 169h1v1h-1zM797 166h1v3h-1zM798 165h1v1h-1zM798 169h1v1h-1zM805 166h1v3h-1zM806 165h1v1h-1zM806 169h1v1h-1zM813 166h1v3h-1zM814 165h1v1h-1zM814 169h1v1h-1zM821 166h1v3h-1zM822 165h1v1h-1zM822 169h1v1h-1zM829 166h1v3h-1zM830 165h1v1h-1zM830 169h1v1h-1zM837 166h1v3h-1zM838 165h1v1h-1zM838 169h1v1h-1zM845 166h1v3h-1zM846 165h1v1h-1zM846 169h1v1h-1zM853 166h1v3h-1zM854 165h1v1h-1zM854 169h1v1h-1zM861 166h1v3h-1zM862 165h1v1h-1zM862 169h1v1h-1zM869 166h1v3h-1zM870 165h1v1h-1zM870 169h1v1h-1zM877 166h1v3h-1zM878 165h1v1h-1zM878 169h1v1h-1zM885 166h1v3h-1zM886 165h1v1h-1zM886 169h1v1h-1zM893 166h1v3h-1zM894 165h1v1h-1zM894 169h1v1h-1zM901 166h1v3h-1zM902 165h1v1h-1zM902 169h1v1h-1zM909 166h1v3h-1zM910 165h1v1h-1zM910 169h1v1h-1zM917 166h1v3h-1zM918 165h1v1h-1zM918 169h1v1h-1zM925 166h1v3h-1zM926 165h1v1h-1zM926 169h1v1h-1zM933 166h1v3h-1zM934 165h1v1h-1zM934 169h1v1h-1zM941 166h1v3h-1zM942 165h1v1h-1zM942 169h1v1h-1z" fill="#0c0c78"/>
<path d="M159 164h1v1h-1zM159 170h1v1h-1zM156 167h1v1h-1zM167 164h1v1h-1zM167 170h1v1h-1zM164 167h1v1h-1zM175 164h1v1h-1zM175 170h1v1h-1zM172 167h1v1h-1zM183 164h1v1h-1zM183 170h1v1h-1zM180 167h1v1h-1zM191 164h1v1h-1zM191 170h1v1h-1zM188 167h1v1h-1zM199 164h1v1h-1zM199 170h1v1h-1zM196 167h1v1h-1zM207 164h1v1h-1zM207 170h1v1h-1zM204 167h1v1h-1zM215 164h1v1h-1zM215 170h1v1h-1zM212 167h1v1h-1zM223 164h1v1h-1zM223 170h1v1h-1zM220 167h1v1h-1zM231 164h1v1h-1zM231 170h1v1h-1zM228 167h1v1h-1zM239 164h1v1h-1zM239 170h1v1h-1zM236 167h1v1h-1zM247 164h1v1h-1zM247 170h1v1h-1zM244 167h1v1h-1zM255 164h1v1h-1zM255 170h1v1h-1zM252 167h1v1h-1zM263 164h1v1h-1zM263 170h1v1h-1zM260 167h1v1h-1zM271 164h1v1h-1zM271 170h1v1h-1zM268 167h1v1h-1zM279 164h1v1h-1zM279 170h1v1h-1zM276 167h1v1h-1zM287 164h1v1h-1zM287 170h1v1h-1zM284 167h1v1h-1zM295 164h1v1h-1zM295 170h1v1h-1zM292 167h1v1h-1zM303 164h1v1h-1zM303 170h1v1h-1zM300 167h1v1h-1zM311 164h1v1h-1zM311 170h1v1h-1zM308 167h1v1h-1zM319 164h1v1h-1zM319 170h1v1h-1zM316 167h1v1h-1zM327 164h1v1h-1zM327 170h1v1h-1zM324 167h1v1h-1zM335 164h1v1h-1zM335 170h1v1h-1zM332 167h1v1h-1zM343 164h1v1h-1zM343 170h1v1h-1zM340 167h1v1h-1zM351 164h1v1h-1zM351 170h1v1h-1zM348 167h1v1h-1zM359 164h1v1h-1zM359 170h1v1h-1zM356 167h1v1h-1zM367 164h1v1h-1zM367 170h1v1h-1zM364 167h1v1h-1zM375 164h1v1h-1zM375 170h1v1h-1zM372 167h1v1h-1zM383 164h1v1h-1zM383 170h1v1h-1zM380 167h1v1h-1zM391 164h1v1h-1zM391 170h1v1h-1zM388 167h1v1h-1zM399 164h1v1h-1zM399 170h1v1h-1zM396 167h1v1h-1zM407 164h1v1h-1zM407 170h1v1h-1zM404 167h1v1h-1zM415 164h1v1h-1zM415 170h1v1h-1zM412 167h1v1h-1zM423 164h1v1h-1zM423 170h1v1h-1zM420 167h1v1h-1zM431 164h1v1h-1zM431 170h1v1h-1zM428 167h1v1h-1zM439 164h1v1h-1zM439 170h1v1h-1zM436 167h1v1h-1zM447 164h1v1h-1zM447 170h1v1h-1zM444 167h1v1h-1zM455 164h1v1h-1zM455 170h1v1h-1zM452 167h1v1h-1zM463 164h1v1h-1zM463 170h1v1h-1zM460 167h1v1h-1zM471 164h1v1h-1zM471 170h1v1h-1zM468 167h1v1h-1zM479 164h1v1h-1zM479 170h1v1h-1zM476 167h1v1h-1zM487 164h1v1h-1zM487 170h1v1h-1zM484 167h1v1h-1zM495 164h1v1h-1zM495 170h1v1h-1zM492 167h1v1h-1zM503 164h1v1h-1zM503 170h1v1h-1zM500 167h1v1h-1zM511 164h1v1h-1zM511 170h1v1h-1zM508 167h1v1h-1zM519 164h1v1h-1zM519 170h1v1h-1zM516 167h1v1h-1zM527 164h1v1h-1zM527 170h1v1h-1zM524 167h1v1h-1zM535 164h1v1h-1zM535 170h1v1h-1zM532 167h1v1h-1zM543 164h1v1h-1zM543 170h1v1h-1zM540 167h1v1h-1zM551 164h1v1h-1zM551 170h1v1h-1zM548 167h1v1h-1zM559 164h1v1h-1zM559 170h1v1h-1zM556 167h1v1h-1zM567 164h1v1h-1zM567 170h1v1h-1zM564 167h1v1h-1zM575 164h1v1h-1zM575 170h1v1h-1zM572 167h1v1h-1zM583 164h1v1h-1zM583 170h1v1h-1zM580 167h1v1h-1zM591 164h1v1h-1zM591 170h1v1h-1zM588 167h1v1h-1zM599 164h1v1h-1zM599 170h1v1h-1zM596 167h1v1h-1zM607 164h1v1h-1zM607 170h1v1h-1zM604 167h1v1h-1zM615 164h1v1h-1zM615 170h1v1h-1zM612 167h1v1h-1zM623 164h1v1h-1zM623 170h1v1h-1zM620 167h1v1h-1zM631 164h1v1h-1zM631 170h1v1h-1zM628 167h1v1h-1zM639 164h1v1h-1zM639 170h1v1h-1zM636 167h1v1h-1zM647 164h1v1h-1zM647 170h1v1h-1zM644 167h1v1h-1zM655 164h1v1h-1zM655 170h1v1h-1zM652 167h1v1h-1zM663 164h1v1h-1zM663 170h1v1h-1zM660 167h1v1h-1zM671 164h1v1h-1zM671 170h1v1h-1zM668 167h1v1h-1zM679 164h1v1h-1zM679 170h1v1h-1zM676 167h1v1h-1zM687 164h1v1h-1zM687 170h1v1h-1zM684 167h1v1h-1zM695 164h1v1h-1zM695 170h1v1h-1zM692 167h1v1h-1zM703 164h1v1h-1zM703 170h1v1h-1zM700 167h1v1h-1zM711 164h1v1h-1zM711 170h1v1h-1zM708 167h1v1h-1zM719 164h1v1h-1zM719 170h1v1h-1zM716 167h1v1h-1zM727 164h1v1h-1zM727 170h1v1h-1zM724 167h1v1h-1zM735 164h1v1h-1zM735 170h1v1h-1zM732 167h1v1h-1zM743 164h1v1h-1zM743 170h1v1h-1zM740 167h1v1h-1zM751 164h1v1h-1zM751 170h1v1h-1zM748 167h1v1h-1zM759 164h1v1h-1zM759 170h1v1h-1zM756 167h1v1h-1zM767 164h1v1h-1zM767 170h1v1h-1zM764 167h1v1h-1zM775 164h1v1h-1zM775 170h1v1h-1zM772 167h1v1h-1zM783 164h1v1h-1zM783 170h1v1h-1zM780 167h1v1h-1zM791 164h1v1h-1zM791 170h1v1h-1zM788 167h1v1h-1zM799 164h1v1h-1zM799 170h1v1h-1zM796 167h1v1h-1zM807 164h1v1h-1zM807 170h1v1h-1zM804 167h1v1h-1zM815 164h1v1h-1zM815 170h1v1h-1zM812 167h1v1h-1zM823 164h1v1h-1zM823 170h1v1h-1zM820 167h1v1h-1zM831 164h1v1h-1zM831 170h1v1h-1zM828 167h1v1h-1zM839 164h1v1h-1zM839 170h1v1h-1zM836 167h1v1h-1zM847 164h1v1h-1zM847 170h1v1h-1zM844 167h1v1h-1zM855 164h1v1h-1zM855 170h1v1h-1zM852 167h1v1h-1zM863 164h1v1h-1zM863 170h1v1h-1zM860 167h1v1h-1zM871 164h1v1h-1zM871 170h1v1h-1zM868 167h1v1h-1zM879 164h1v1h-1zM879 170h1v1h-1zM876 167h1v1h-1zM887 164h1v1h-1zM887 170h1v1h-1zM884 167h1v1h-1zM895 164h1v1h-1zM895 170h1v1h-1zM892 167h1v1h-1zM903 164h1v1h-1zM903 170h1v1h-1zM900 167h1v1h-1zM911 164h1v1h-1zM911 170h1v1h-1zM908 167h1v1h-1zM919 164h1v1h-1zM919 170h1v1h-1zM916 167h1v1h-1zM927 164h1v1h-1zM927 170h1v1h-1zM924 167h1v1h-1zM935 164h1v1h-1zM935 170h1v1h-1zM932 167h1v1h-1zM943 164h1v1h-1zM943 170h1v1h-1zM940 167h1v1h-1z" fill="#0c0c78" fill-opacity="0.55"/>
<text transform="translate(109.70 188) scale(0.9492 1.0)" font-size="13.75" fill="#0c0c78" stroke="#0c0c78" stroke-width="0.18" text-anchor="start" xml:space="preserve">THAP4</text>
<path d="M157 183h792v1h-792zM157 182h1v3h-1zM158 181h1v1h-1zM158 185h1v1h-1zM165 182h1v3h-1zM166 181h1v1h-1zM166 185h1v1h-1zM173 182h1v3h-1zM174 181h1v1h-1zM174 185h1v1h-1zM181 182h1v3h-1zM182 181h1v1h-1zM182 185h1v1h-1zM189 182h1v3h-1zM190 181h1v1h-1zM190 185h1v1h-1zM197 182h1v3h-1zM198 181h1v1h-1zM198 185h1v1h-1zM205 182h1v3h-1zM206 181h1v1h-1zM206 185h1v1h-1zM213 182h1v3h-1zM214 181h1v1h-1zM214 185h1v1h-1zM221 182h1v3h-1zM222 181h1v1h-1zM222 185h1v1h-1zM229 182h1v3h-1zM230 181h1v1h-1zM230 185h1v1h-1zM237 182h1v3h-1zM238 181h1v1h-1zM238 185h1v1h-1zM245 182h1v3h-1zM246 181h1v1h-1zM246 185h1v1h-1zM253 182h1v3h-1zM254 181h1v1h-1zM254 185h1v1h-1zM261 182h1v3h-1zM262 181h1v1h-1zM262 185h1v1h-1zM269 182h1v3h-1zM270 181h1v1h-1zM270 185h1v1h-1zM277 182h1v3h-1zM278 181h1v1h-1zM278 185h1v1h-1zM285 182h1v3h-1zM286 181h1v1h-1zM286 185h1v1h-1zM293 182h1v3h-1zM294 181h1v1h-1zM294 185h1v1h-1zM301 182h1v3h-1zM302 181h1v1h-1zM302 185h1v1h-1zM309 182h1v3h-1zM310 181h1v1h-1zM310 185h1v1h-1zM317 182h1v3h-1zM318 181h1v1h-1zM318 185h1v1h-1zM325 182h1v3h-1zM326 181h1v1h-1zM326 185h1v1h-1zM333 182h1v3h-1zM334 181h1v1h-1zM334 185h1v1h-1zM341 182h1v3h-1zM342 181h1v1h-1zM342 185h1v1h-1zM349 182h1v3h-1zM350 181h1v1h-1zM350 185h1v1h-1zM357 182h1v3h-1zM358 181h1v1h-1zM358 185h1v1h-1zM365 182h1v3h-1zM366 181h1v1h-1zM366 185h1v1h-1zM373 182h1v3h-1zM374 181h1v1h-1zM374 185h1v1h-1zM381 182h1v3h-1zM382 181h1v1h-1zM382 185h1v1h-1zM389 182h1v3h-1zM390 181h1v1h-1zM390 185h1v1h-1zM397 182h1v3h-1zM398 181h1v1h-1zM398 185h1v1h-1zM405 182h1v3h-1zM406 181h1v1h-1zM406 185h1v1h-1zM413 182h1v3h-1zM414 181h1v1h-1zM414 185h1v1h-1zM421 182h1v3h-1zM422 181h1v1h-1zM422 185h1v1h-1zM429 182h1v3h-1zM430 181h1v1h-1zM430 185h1v1h-1zM437 182h1v3h-1zM438 181h1v1h-1zM438 185h1v1h-1zM445 182h1v3h-1zM446 181h1v1h-1zM446 185h1v1h-1zM453 182h1v3h-1zM454 181h1v1h-1zM454 185h1v1h-1zM461 182h1v3h-1zM462 181h1v1h-1zM462 185h1v1h-1zM469 182h1v3h-1zM470 181h1v1h-1zM470 185h1v1h-1zM477 182h1v3h-1zM478 181h1v1h-1zM478 185h1v1h-1zM485 182h1v3h-1zM486 181h1v1h-1zM486 185h1v1h-1zM493 182h1v3h-1zM494 181h1v1h-1zM494 185h1v1h-1zM501 182h1v3h-1zM502 181h1v1h-1zM502 185h1v1h-1zM509 182h1v3h-1zM510 181h1v1h-1zM510 185h1v1h-1zM517 182h1v3h-1zM518 181h1v1h-1zM518 185h1v1h-1zM525 182h1v3h-1zM526 181h1v1h-1zM526 185h1v1h-1zM533 182h1v3h-1zM534 181h1v1h-1zM534 185h1v1h-1zM541 182h1v3h-1zM542 181h1v1h-1zM542 185h1v1h-1zM549 182h1v3h-1zM550 181h1v1h-1zM550 185h1v1h-1zM557 182h1v3h-1zM558 181h1v1h-1zM558 185h1v1h-1zM565 182h1v3h-1zM566 181h1v1h-1zM566 185h1v1h-1zM573 182h1v3h-1zM574 181h1v1h-1zM574 185h1v1h-1zM581 182h1v3h-1zM582 181h1v1h-1zM582 185h1v1h-1zM589 182h1v3h-1zM590 181h1v1h-1zM590 185h1v1h-1zM597 182h1v3h-1zM598 181h1v1h-1zM598 185h1v1h-1zM605 182h1v3h-1zM606 181h1v1h-1zM606 185h1v1h-1zM613 182h1v3h-1zM614 181h1v1h-1zM614 185h1v1h-1zM621 182h1v3h-1zM622 181h1v1h-1zM622 185h1v1h-1zM629 182h1v3h-1zM630 181h1v1h-1zM630 185h1v1h-1zM637 182h1v3h-1zM638 181h1v1h-1zM638 185h1v1h-1zM645 182h1v3h-1zM646 181h1v1h-1zM646 185h1v1h-1zM653 182h1v3h-1zM654 181h1v1h-1zM654 185h1v1h-1zM661 182h1v3h-1zM662 181h1v1h-1zM662 185h1v1h-1zM669 182h1v3h-1zM670 181h1v1h-1zM670 185h1v1h-1zM677 182h1v3h-1zM678 181h1v1h-1zM678 185h1v1h-1zM685 182h1v3h-1zM686 181h1v1h-1zM686 185h1v1h-1zM693 182h1v3h-1zM694 181h1v1h-1zM694 185h1v1h-1zM701 182h1v3h-1zM702 181h1v1h-1zM702 185h1v1h-1zM709 182h1v3h-1zM710 181h1v1h-1zM710 185h1v1h-1zM717 182h1v3h-1zM718 181h1v1h-1zM718 185h1v1h-1zM725 182h1v3h-1zM726 181h1v1h-1zM726 185h1v1h-1zM733 182h1v3h-1zM734 181h1v1h-1zM734 185h1v1h-1zM741 182h1v3h-1zM742 181h1v1h-1zM742 185h1v1h-1zM749 182h1v3h-1zM750 181h1v1h-1zM750 185h1v1h-1zM757 182h1v3h-1zM758 181h1v1h-1zM758 185h1v1h-1zM765 182h1v3h-1zM766 181h1v1h-1zM766 185h1v1h-1zM773 182h1v3h-1zM774 181h1v1h-1zM774 185h1v1h-1zM781 182h1v3h-1zM782 181h1v1h-1zM782 185h1v1h-1zM789 182h1v3h-1zM790 181h1v1h-1zM790 185h1v1h-1zM797 182h1v3h-1zM798 181h1v1h-1zM798 185h1v1h-1zM805 182h1v3h-1zM806 181h1v1h-1zM806 185h1v1h-1zM813 182h1v3h-1zM814 181h1v1h-1zM814 185h1v1h-1zM821 182h1v3h-1zM822 181h1v1h-1zM822 185h1v1h-1zM829 182h1v3h-1zM830 181h1v1h-1zM830 185h1v1h-1zM837 182h1v3h-1zM838 181h1v1h-1zM838 185h1v1h-1zM845 182h1v3h-1zM846 181h1v1h-1zM846 185h1v1h-1zM853 182h1v3h-1zM854 181h1v1h-1zM854 185h1v1h-1zM861 182h1v3h-1zM862 181h1v1h-1zM862 185h1v1h-1zM869 182h1v3h-1zM870 181h1v1h-1zM870 185h1v1h-1zM877 182h1v3h-1zM878 181h1v1h-1zM878 185h1v1h-1zM885 182h1v3h-1zM886 181h1v1h-1zM886 185h1v1h-1zM893 182h1v3h-1zM894 181h1v1h-1zM894 185h1v1h-1zM901 182h1v3h-1zM902 181h1v1h-1zM902 185h1v1h-1zM909 182h1v3h-1zM910 181h1v1h-1zM910 185h1v1h-1zM917 182h1v3h-1zM918 181h1v1h-1zM918 185h1v1h-1zM925 182h1v3h-1zM926 181h1v1h-1zM926 185h1v1h-1zM933 182h1v3h-1zM934 181h1v1h-1zM934 185h1v1h-1zM941 182h1v3h-1zM942 181h1v1h-1zM942 185h1v1h-1z" fill="#0c0c78"/>
<path d="M159 180h1v1h-1zM159 186h1v1h-1zM156 183h1v1h-1zM167 180h1v1h-1zM167 186h1v1h-1zM164 183h1v1h-1zM175 180h1v1h-1zM175 186h1v1h-1zM172 183h1v1h-1zM183 180h1v1h-1zM183 186h1v1h-1zM180 183h1v1h-1zM191 180h1v1h-1zM191 186h1v1h-1zM188 183h1v1h-1zM199 180h1v1h-1zM199 186h1v1h-1zM196 183h1v1h-1zM207 180h1v1h-1zM207 186h1v1h-1zM204 183h1v1h-1zM215 180h1v1h-1zM215 186h1v1h-1zM212 183h1v1h-1zM223 180h1v1h-1zM223 186h1v1h-1zM220 183h1v1h-1zM231 180h1v1h-1zM231 186h1v1h-1zM228 183h1v1h-1zM239 180h1v1h-1zM239 186h1v1h-1zM236 183h1v1h-1zM247 180h1v1h-1zM247 186h1v1h-1zM244 183h1v1h-1zM255 180h1v1h-1zM255 186h1v1h-1zM252 183h1v1h-1zM263 180h1v1h-1zM263 186h1v1h-1zM260 183h1v1h-1zM271 180h1v1h-1zM271 186h1v1h-1zM268 183h1v1h-1zM279 180h1v1h-1zM279 186h1v1h-1zM276 183h1v1h-1zM287 180h1v1h-1zM287 186h1v1h-1zM284 183h1v1h-1zM295 180h1v1h-1zM295 186h1v1h-1zM292 183h1v1h-1zM303 180h1v1h-1zM303 186h1v1h-1zM300 183h1v1h-1zM311 180h1v1h-1zM311 186h1v1h-1zM308 183h1v1h-1zM319 180h1v1h-1zM319 186h1v1h-1zM316 183h1v1h-1zM327 180h1v1h-1zM327 186h1v1h-1zM324 183h1v1h-1zM335 180h1v1h-1zM335 186h1v1h-1zM332 183h1v1h-1zM343 180h1v1h-1zM343 186h1v1h-1zM340 183h1v1h-1zM351 180h1v1h-1zM351 186h1v1h-1zM348 183h1v1h-1zM359 180h1v1h-1zM359 186h1v1h-1zM356 183h1v1h-1zM367 180h1v1h-1zM367 186h1v1h-1zM364 183h1v1h-1zM375 180h1v1h-1zM375 186h1v1h-1zM372 183h1v1h-1zM383 180h1v1h-1zM383 186h1v1h-1zM380 183h1v1h-1zM391 180h1v1h-1zM391 186h1v1h-1zM388 183h1v1h-1zM399 180h1v1h-1zM399 186h1v1h-1zM396 183h1v1h-1zM407 180h1v1h-1zM407 186h1v1h-1zM404 183h1v1h-1zM415 180h1v1h-1zM415 186h1v1h-1zM412 183h1v1h-1zM423 180h1v1h-1zM423 186h1v1h-1zM420 183h1v1h-1zM431 180h1v1h-1zM431 186h1v1h-1zM428 183h1v1h-1zM439 180h1v1h-1zM439 186h1v1h-1zM436 183h1v1h-1zM447 180h1v1h-1zM447 186h1v1h-1zM444 183h1v1h-1zM455 180h1v1h-1zM455 186h1v1h-1zM452 183h1v1h-1zM463 180h1v1h-1zM463 186h1v1h-1zM460 183h1v1h-1zM471 180h1v1h-1zM471 186h1v1h-1zM468 183h1v1h-1zM479 180h1v1h-1zM479 186h1v1h-1zM476 183h1v1h-1zM487 180h1v1h-1zM487 186h1v1h-1zM484 183h1v1h-1zM495 180h1v1h-1zM495 186h1v1h-1zM492 183h1v1h-1zM503 180h1v1h-1zM503 186h1v1h-1zM500 183h1v1h-1zM511 180h1v1h-1zM511 186h1v1h-1zM508 183h1v1h-1zM519 180h1v1h-1zM519 186h1v1h-1zM516 183h1v1h-1zM527 180h1v1h-1zM527 186h1v1h-1zM524 183h1v1h-1zM535 180h1v1h-1zM535 186h1v1h-1zM532 183h1v1h-1zM543 180h1v1h-1zM543 186h1v1h-1zM540 183h1v1h-1zM551 180h1v1h-1zM551 186h1v1h-1zM548 183h1v1h-1zM559 180h1v1h-1zM559 186h1v1h-1zM556 183h1v1h-1zM567 180h1v1h-1zM567 186h1v1h-1zM564 183h1v1h-1zM575 180h1v1h-1zM575 186h1v1h-1zM572 183h1v1h-1zM583 180h1v1h-1zM583 186h1v1h-1zM580 183h1v1h-1zM591 180h1v1h-1zM591 186h1v1h-1zM588 183h1v1h-1zM599 180h1v1h-1zM599 186h1v1h-1zM596 183h1v1h-1zM607 180h1v1h-1zM607 186h1v1h-1zM604 183h1v1h-1zM615 180h1v1h-1zM615 186h1v1h-1zM612 183h1v1h-1zM623 180h1v1h-1zM623 186h1v1h-1zM620 183h1v1h-1zM631 180h1v1h-1zM631 186h1v1h-1zM628 183h1v1h-1zM639 180h1v1h-1zM639 186h1v1h-1zM636 183h1v1h-1zM647 180h1v1h-1zM647 186h1v1h-1zM644 183h1v1h-1zM655 180h1v1h-1zM655 186h1v1h-1zM652 183h1v1h-1zM663 180h1v1h-1zM663 186h1v1h-1zM660 183h1v1h-1zM671 180h1v1h-1zM671 186h1v1h-1zM668 183h1v1h-1zM679 180h1v1h-1zM679 186h1v1h-1zM676 183h1v1h-1zM687 180h1v1h-1zM687 186h1v1h-1zM684 183h1v1h-1zM695 180h1v1h-1zM695 186h1v1h-1zM692 183h1v1h-1zM703 180h1v1h-1zM703 186h1v1h-1zM700 183h1v1h-1zM711 180h1v1h-1zM711 186h1v1h-1zM708 183h1v1h-1zM719 180h1v1h-1zM719 186h1v1h-1zM716 183h1v1h-1zM727 180h1v1h-1zM727 186h1v1h-1zM724 183h1v1h-1zM735 180h1v1h-1zM735 186h1v1h-1zM732 183h1v1h-1zM743 180h1v1h-1zM743 186h1v1h-1zM740 183h1v1h-1zM751 180h1v1h-1zM751 186h1v1h-1zM748 183h1v1h-1zM759 180h1v1h-1zM759 186h1v1h-1zM756 183h1v1h-1zM767 180h1v1h-1zM767 186h1v1h-1zM764 183h1v1h-1zM775 180h1v1h-1zM775 186h1v1h-1zM772 183h1v1h-1zM783 180h1v1h-1zM783 186h1v1h-1zM780 183h1v1h-1zM791 180h1v1h-1zM791 186h1v1h-1zM788 183h1v1h-1zM799 180h1v1h-1zM799 186h1v1h-1zM796 183h1v1h-1zM807 180h1v1h-1zM807 186h1v1h-1zM804 183h1v1h-1zM815 180h1v1h-1zM815 186h1v1h-1zM812 183h1v1h-1zM823 180h1v1h-1zM823 186h1v1h-1zM820 183h1v1h-1zM831 180h1v1h-1zM831 186h1v1h-1zM828 183h1v1h-1zM839 180h1v1h-1zM839 186h1v1h-1zM836 183h1v1h-1zM847 180h1v1h-1zM847 186h1v1h-1zM844 183h1v1h-1zM855 180h1v1h-1zM855 186h1v1h-1zM852 183h1v1h-1zM863 180h1v1h-1zM863 186h1v1h-1zM860 183h1v1h-1zM871 180h1v1h-1zM871 186h1v1h-1zM868 183h1v1h-1zM879 180h1v1h-1zM879 186h1v1h-1zM876 183h1v1h-1zM887 180h1v1h-1zM887 186h1v1h-1zM884 183h1v1h-1zM895 180h1v1h-1zM895 186h1v1h-1zM892 183h1v1h-1zM903 180h1v1h-1zM903 186h1v1h-1zM900 183h1v1h-1zM911 180h1v1h-1zM911 186h1v1h-1zM908 183h1v1h-1zM919 180h1v1h-1zM919 186h1v1h-1zM916 183h1v1h-1zM927 180h1v1h-1zM927 186h1v1h-1zM924 183h1v1h-1zM935 180h1v1h-1zM935 186h1v1h-1zM932 183h1v1h-1zM943 180h1v1h-1zM943 186h1v1h-1zM940 183h1v1h-1z" fill="#0c0c78" fill-opacity="0.55"/>
<text transform="translate(490.90 204) scale(0.9907 1.0)" font-size="11" fill="#000" stroke="#000" stroke-width="0.1" text-anchor="start" xml:space="preserve">RefSeq genes from NCBI</text>
<text transform="translate(59.34 219) scale(0.9589 1.0)" font-size="13.75" fill="#0c0c78" stroke="#0c0c78" stroke-width="0.18" text-anchor="start" xml:space="preserve">RefSeq</text>
<text transform="translate(107.20 219) scale(0.9219 1.0)" font-size="13.75" fill="#0c0c78" stroke="#0c0c78" stroke-width="0.18" text-anchor="start" xml:space="preserve">Curated</text>
<rect x="157" y="214" width="792" height="1" fill="#0c0c78"/>
<text transform="translate(445.40 235) scale(0.9782 1.0)" font-size="11" fill="#000" stroke="#000" stroke-width="0.1" text-anchor="start" xml:space="preserve">Publications: Sequences in Scientific Articles</text>
<text transform="translate(86.90 250) scale(0.9387 1.0)" font-size="13.75" fill="#000" stroke="#000" stroke-width="0.18" text-anchor="start" xml:space="preserve">Sequences</text>
<text transform="translate(118.00 266) scale(0.9526 1.0)" font-size="13.75" fill="#000" stroke="#000" stroke-width="0.18" text-anchor="start" xml:space="preserve">SNPs</text>
<text transform="translate(368.10 283) scale(0.9548 1.0)" font-size="13.75" fill="#006400" stroke="#006400" stroke-width="0.18" text-anchor="start" xml:space="preserve">OMIM</text>
<text transform="translate(408.10 283) scale(0.9032 1.0)" font-size="13.75" fill="#006400" stroke="#006400" stroke-width="0.18" text-anchor="start" xml:space="preserve">Gene</text>
<text transform="translate(442.56 283) scale(0.9436 1.0)" font-size="13.75" fill="#006400" stroke="#006400" stroke-width="0.18" text-anchor="start" xml:space="preserve">Phenotypes</text>
<text transform="translate(516.30 283) scale(0.9500 1.0)" font-size="13.75" fill="#006400" stroke="#006400" stroke-width="0.18" text-anchor="start" xml:space="preserve">-</text>
<text transform="translate(523.89 283) scale(0.9092 1.0)" font-size="13.75" fill="#006400" stroke="#006400" stroke-width="0.18" text-anchor="start" xml:space="preserve">Dark</text>
<text transform="translate(555.10 283) scale(0.8731 1.0)" font-size="13.75" fill="#006400" stroke="#006400" stroke-width="0.18" text-anchor="start" xml:space="preserve">Green</text>
<text transform="translate(594.30 283) scale(0.9236 1.0)" font-size="13.75" fill="#006400" stroke="#006400" stroke-width="0.18" text-anchor="start" xml:space="preserve">Can</text>
<text transform="translate(621.62 283) scale(0.8843 1.0)" font-size="13.75" fill="#006400" stroke="#006400" stroke-width="0.18" text-anchor="start" xml:space="preserve">Be</text>
<text transform="translate(640.95 283) scale(0.9510 1.0)" font-size="13.75" fill="#006400" stroke="#006400" stroke-width="0.18" text-anchor="start" xml:space="preserve">Disease-causing</text>
<text transform="translate(73.70 297) scale(0.9765 1.0)" font-size="13.75" fill="#006400" stroke="#006400" stroke-width="0.18" text-anchor="start" xml:space="preserve">OMIM</text>
<text transform="translate(113.90 297) scale(0.9228 1.0)" font-size="13.75" fill="#006400" stroke="#006400" stroke-width="0.18" text-anchor="start" xml:space="preserve">Genes</text>
<rect x="156" y="285" width="793" height="15" fill="#bebebe"/>
<text transform="translate(435.40 313) scale(0.9998 1.0)" font-size="11" fill="#000" stroke="#000" stroke-width="0.1" text-anchor="start" xml:space="preserve">Short Genetic Variants from dbSNP release 155</text>
<text transform="translate(26.50 328) scale(0.9359 1.0)" font-size="13.75" fill="#000" stroke="#000" stroke-width="0.18" text-anchor="start" xml:space="preserve">Common</text>
<text transform="translate(82.20 328) scale(0.9216 1.0)" font-size="13.75" fill="#000" stroke="#000" stroke-width="0.18" text-anchor="start" xml:space="preserve">dbSNP(155)</text>
<text transform="translate(266.00 345) scale(0.9150 1.0)" font-size="13.75" fill="#000" stroke="#000" stroke-width="0.18" text-anchor="start" xml:space="preserve">Gene</text>
<text transform="translate(300.84 345) scale(0.9628 1.0)" font-size="13.75" fill="#000" stroke="#000" stroke-width="0.18" text-anchor="start" xml:space="preserve">Expression</text>
<text transform="translate(370.40 345) scale(0.9647 1.0)" font-size="13.75" fill="#000" stroke="#000" stroke-width="0.18" text-anchor="start" xml:space="preserve">in</text>
<text transform="translate(383.90 345) scale(0.9139 1.0)" font-size="13.75" fill="#000" stroke="#000" stroke-width="0.18" text-anchor="start" xml:space="preserve">54</text>
<text transform="translate(402.00 345) scale(0.9599 1.0)" font-size="13.75" fill="#000" stroke="#000" stroke-width="0.18" text-anchor="start" xml:space="preserve">tissues</text>
<text transform="translate(448.00 345) scale(0.9317 1.0)" font-size="13.75" fill="#000" stroke="#000" stroke-width="0.18" text-anchor="start" xml:space="preserve">from</text>
<text transform="translate(477.90 345) scale(0.9528 1.0)" font-size="13.75" fill="#000" stroke="#000" stroke-width="0.18" text-anchor="start" xml:space="preserve">GTEx</text>
<text transform="translate(515.24 345) scale(0.9569 1.0)" font-size="13.75" fill="#000" stroke="#000" stroke-width="0.18" text-anchor="start" xml:space="preserve">RNA-seq</text>
<text transform="translate(572.20 345) scale(0.9015 1.0)" font-size="13.75" fill="#000" stroke="#000" stroke-width="0.18" text-anchor="start" xml:space="preserve">of</text>
<text transform="translate(587.06 345) scale(0.9402 1.0)" font-size="13.75" fill="#000" stroke="#000" stroke-width="0.18" text-anchor="start" xml:space="preserve">17382</text>
<text transform="translate(625.90 345) scale(0.9705 1.0)" font-size="13.75" fill="#000" stroke="#000" stroke-width="0.18" text-anchor="start" xml:space="preserve">samples,</text>
<text transform="translate(683.20 345) scale(0.9015 1.0)" font-size="13.75" fill="#000" stroke="#000" stroke-width="0.18" text-anchor="start" xml:space="preserve">948</text>
<text transform="translate(708.00 345) scale(0.9083 1.0)" font-size="13.75" fill="#000" stroke="#000" stroke-width="0.18" text-anchor="start" xml:space="preserve">donors</text>
<text transform="translate(751.40 345) scale(0.9468 1.0)" font-size="13.75" fill="#000" stroke="#000" stroke-width="0.18" text-anchor="start" xml:space="preserve">(V8,</text>
<text transform="translate(778.90 345) scale(0.9698 1.0)" font-size="13.75" fill="#000" stroke="#000" stroke-width="0.18" text-anchor="start" xml:space="preserve">Aug</text>
<text transform="translate(805.80 345) scale(0.9252 1.0)" font-size="13.75" fill="#000" stroke="#000" stroke-width="0.18" text-anchor="start" xml:space="preserve">2019)</text>
<text transform="translate(109.60 381) scale(0.9514 1.0)" font-size="13.75" fill="#000" stroke="#000" stroke-width="0.18" text-anchor="start" xml:space="preserve">THAP4</text>
<rect x="155.5" y="348.5" width="378" height="52" fill="#fff" stroke="#eeeeee" stroke-width="1"/>
<rect x="156" y="352" width="5" height="48" fill="#FFA54F"/>
<rect x="163" y="354" width="5" height="46" fill="#EE9A00"/>
<rect x="170" y="358" width="5" height="42" fill="#8FBC8F"/>
<rect x="177" y="352" width="5" height="48" fill="#8B1C62"/>
<rect x="184" y="353" width="5" height="47" fill="#EE6A50"/>
<rect x="191" y="351" width="5" height="49" fill="#FF0000"/>
<rect x="198" y="350" width="5" height="50" fill="#CDB79E"/>
<rect x="205" y="361" width="5" height="39" fill="#EEEE00"/>
<rect x="212" y="358" width="5" height="42" fill="#EEEE00"/>
<rect x="219" y="357" width="5" height="43" fill="#EEEE00"/>
<rect x="226" y="354" width="5" height="46" fill="#EEEE00"/>
<rect x="233" y="354" width="5" height="46" fill="#EEEE00"/>
<rect x="240" y="356" width="5" height="44" fill="#EEEE00"/>
<rect x="247" y="356" width="5" height="44" fill="#EEEE00"/>
<rect x="254" y="363" width="5" height="37" fill="#EEEE00"/>
<rect x="261" y="358" width="5" height="42" fill="#EEEE00"/>
<rect x="268" y="356" width="5" height="44" fill="#EEEE00"/>
<rect x="275" y="360" width="5" height="40" fill="#EEEE00"/>
<rect x="282" y="360" width="5" height="40" fill="#EEEE00"/>
<rect x="289" y="360" width="5" height="40" fill="#EEEE00"/>
<rect x="296" y="353" width="5" height="47" fill="#00CDCD"/>
<rect x="303" y="352" width="5" height="48" fill="#EE82EE"/>
<rect x="310" y="350" width="5" height="50" fill="#9AC0CD"/>
<rect x="317" y="350" width="5" height="50" fill="#EED5D2"/>
<rect x="324" y="349" width="5" height="51" fill="#EED5D2"/>
<rect x="331" y="351" width="5" height="49" fill="#CDB79E"/>
<rect x="338" y="353" width="5" height="47" fill="#EEC591"/>
<rect x="345" y="351" width="5" height="49" fill="#8B7355"/>
<rect x="352" y="352" width="5" height="48" fill="#8B7355"/>
<rect x="359" y="351" width="5" height="49" fill="#CDAA7D"/>
<rect x="366" y="351" width="5" height="49" fill="#EED5D2"/>
<rect x="373" y="355" width="5" height="45" fill="#B452CD"/>
<rect x="380" y="356" width="5" height="44" fill="#7A378B"/>
<rect x="387" y="353" width="5" height="47" fill="#CDB79E"/>
<rect x="394" y="351" width="5" height="49" fill="#CDB79E"/>
<rect x="401" y="363" width="5" height="37" fill="#CDB79E"/>
<rect x="408" y="353" width="5" height="47" fill="#9ACD32"/>
<rect x="415" y="355" width="5" height="45" fill="#CDB79E"/>
<rect x="422" y="350" width="5" height="50" fill="#7A67EE"/>
<rect x="429" y="352" width="5" height="48" fill="#FFD700"/>
<rect x="436" y="350" width="5" height="50" fill="#FFB6C1"/>
<rect x="443" y="363" width="5" height="37" fill="#CD9B1D"/>
<rect x="450" y="352" width="5" height="48" fill="#B4EEB4"/>
<rect x="457" y="351" width="5" height="49" fill="#D9D9D9"/>
<rect x="464" y="352" width="5" height="48" fill="#3A5FCD"/>
<rect x="471" y="351" width="5" height="49" fill="#1E90FF"/>
<rect x="478" y="356" width="5" height="44" fill="#CDB79E"/>
<rect x="485" y="358" width="5" height="42" fill="#CDB79E"/>
<rect x="492" y="355" width="5" height="45" fill="#FFD39B"/>
<rect x="499" y="348" width="5" height="52" fill="#A6A6A6"/>
<rect x="506" y="352" width="5" height="48" fill="#008B45"/>
<rect x="513" y="349" width="5" height="51" fill="#EED5D2"/>
<rect x="520" y="351" width="5" height="49" fill="#EED5D2"/>
<rect x="527" y="370" width="5" height="30" fill="#FF00FF"/>
<rect x="156" y="401" width="793" height="2" fill="#000078"/>
<text transform="translate(280.46 418) scale(0.9403 1.0)" font-size="13.75" fill="#000" stroke="#000" stroke-width="0.18" text-anchor="start" xml:space="preserve">H3K27Ac</text>
<text transform="translate(339.35 418) scale(0.9501 1.0)" font-size="13.75" fill="#000" stroke="#000" stroke-width="0.18" text-anchor="start" xml:space="preserve">Mark</text>
<text transform="translate(373.20 418) scale(0.9398 1.0)" font-size="13.75" fill="#000" stroke="#000" stroke-width="0.18" text-anchor="start" xml:space="preserve">(Often</text>
<text transform="translate(412.44 418) scale(0.9561 1.0)" font-size="13.75" fill="#000" stroke="#000" stroke-width="0.18" text-anchor="start" xml:space="preserve">Found</text>
<text transform="translate(453.72 418) scale(0.8794 1.0)" font-size="13.75" fill="#000" stroke="#000" stroke-width="0.18" text-anchor="start" xml:space="preserve">Near</text>
<text transform="translate(484.10 418) scale(0.9710 1.0)" font-size="13.75" fill="#000" stroke="#000" stroke-width="0.18" text-anchor="start" xml:space="preserve">Active</text>
<text transform="translate(524.98 418) scale(0.9174 1.0)" font-size="13.75" fill="#000" stroke="#000" stroke-width="0.18" text-anchor="start" xml:space="preserve">Regulatory</text>
<text transform="translate(590.64 418) scale(0.9633 1.0)" font-size="13.75" fill="#000" stroke="#000" stroke-width="0.18" text-anchor="start" xml:space="preserve">Elements)</text>
<text transform="translate(654.00 418) scale(0.9422 1.0)" font-size="13.75" fill="#000" stroke="#000" stroke-width="0.18" text-anchor="start" xml:space="preserve">on</text>
<text transform="translate(672.10 418) scale(1.0714 1.0)" font-size="13.75" fill="#000" stroke="#000" stroke-width="0.18" text-anchor="start" xml:space="preserve">7</text>
<text transform="translate(683.00 418) scale(0.9622 1.0)" font-size="13.75" fill="#000" stroke="#000" stroke-width="0.18" text-anchor="start" xml:space="preserve">cell</text>
<text transform="translate(707.60 418) scale(0.9013 1.0)" font-size="13.75" fill="#000" stroke="#000" stroke-width="0.18" text-anchor="start" xml:space="preserve">lines</text>
<text transform="translate(737.90 418) scale(0.9502 1.0)" font-size="13.75" fill="#000" stroke="#000" stroke-width="0.18" text-anchor="start" xml:space="preserve">from</text>
<text transform="translate(767.36 418) scale(0.9366 1.0)" font-size="13.75" fill="#000" stroke="#000" stroke-width="0.18" text-anchor="start" xml:space="preserve">ENCODE</text>
<text transform="translate(12.72 432) scale(0.9336 1.0)" font-size="13.75" fill="#000" stroke="#000" stroke-width="0.18" text-anchor="start" xml:space="preserve">Layered</text>
<text transform="translate(62.46 432) scale(0.9351 1.0)" font-size="13.75" fill="#000" stroke="#000" stroke-width="0.18" text-anchor="start" xml:space="preserve">H3K27Ac</text>
<rect x="156" y="448" width="793" height="1" fill="#3a78c8"/>
<rect x="156" y="449" width="793" height="1" fill="#140a28"/>
<text transform="translate(404.91 464) scale(0.8881 1.0)" font-size="13.75" fill="#3c3c8c" stroke="#3c3c8c" stroke-width="0.18" text-anchor="start" xml:space="preserve">100</text>
<text transform="translate(430.20 464) scale(0.9288 1.0)" font-size="13.75" fill="#3c3c8c" stroke="#3c3c8c" stroke-width="0.18" text-anchor="start" xml:space="preserve">vertebrates</text>
<text transform="translate(498.86 464) scale(0.9399 1.0)" font-size="13.75" fill="#3c3c8c" stroke="#3c3c8c" stroke-width="0.18" text-anchor="start" xml:space="preserve">Basewise</text>
<text transform="translate(559.60 464) scale(0.9344 1.0)" font-size="13.75" fill="#3c3c8c" stroke="#3c3c8c" stroke-width="0.18" text-anchor="start" xml:space="preserve">Conservation</text>
<text transform="translate(639.30 464) scale(0.8875 1.0)" font-size="13.75" fill="#3c3c8c" stroke="#3c3c8c" stroke-width="0.18" text-anchor="start" xml:space="preserve">by</text>
<text transform="translate(656.96 464) scale(0.9411 1.0)" font-size="13.75" fill="#3c3c8c" stroke="#3c3c8c" stroke-width="0.18" text-anchor="start" xml:space="preserve">PhyloP</text>
<text transform="translate(115.60 463) scale(0.9441 0.93)" font-size="13.75" fill="#3c3c8c" stroke="#3c3c8c" stroke-width="0.18" text-anchor="start" xml:space="preserve">4.88</text>
<rect x="145" y="464" width="8" height="1" fill="#3c3c8c"/>
<text transform="translate(12.67 488) scale(0.9330 1.0)" font-size="13.75" fill="#3c3c8c" stroke="#3c3c8c" stroke-width="0.18" text-anchor="start" xml:space="preserve">100</text>
<text transform="translate(38.10 488) scale(0.9760 1.0)" font-size="13.75" fill="#3c3c8c" stroke="#3c3c8c" stroke-width="0.18" text-anchor="start" xml:space="preserve">Vert.</text>
<text transform="translate(70.10 488) scale(0.9093 1.0)" font-size="13.75" fill="#3c3c8c" stroke="#3c3c8c" stroke-width="0.18" text-anchor="start" xml:space="preserve">Cons</text>
<text transform="translate(118.80 513) scale(0.9315 0.93)" font-size="13.75" fill="#8c3c3c" stroke="#8c3c3c" stroke-width="0.18" text-anchor="start" xml:space="preserve">-4.5</text>
<rect x="145" y="514" width="8" height="1" fill="#8c3c3c"/>
<g shape-rendering="crispEdges">
<defs><linearGradient id="r1"><stop offset="0" stop-color="#f00" stop-opacity="0.1"/><stop offset="0.6" stop-color="#f00" stop-opacity="1"/><stop offset="1" stop-color="#f00" stop-opacity="0.5"/></linearGradient><linearGradient id="r2"><stop offset="0" stop-color="#f00" stop-opacity="0.5"/><stop offset="0.3" stop-color="#f00" stop-opacity="0.95"/><stop offset="0.5" stop-color="#f00" stop-opacity="0.6"/><stop offset="0.75" stop-color="#f00" stop-opacity="0.95"/><stop offset="1" stop-color="#f00" stop-opacity="0.5"/></linearGradient><linearGradient id="r3"><stop offset="0" stop-color="#f00" stop-opacity="0.5"/><stop offset="0.35" stop-color="#f00" stop-opacity="1"/><stop offset="1" stop-color="#f00" stop-opacity="0.1"/></linearGradient></defs>
<rect x="162" y="493" width="11" height="1" fill="url(#r1)"/><rect x="173" y="492" width="21" height="1" fill="url(#r2)"/><rect x="193" y="493" width="11" height="1" fill="url(#r3)"/>
</g>
<path d="M286 489.5L293 486.8V492.2Z" fill="#a09a00"/>
<path d="M292 487.5H320L326 488.3M292 491.5H320L327 490.6" stroke="#aaa418" fill="none" stroke-width="1"/>
<rect x="406" y="492" width="38" height="1" fill="#60ff60" fill-opacity="0.4"/><rect x="422" y="492" width="6" height="3" fill="#00f000"/>
<path d="M589.5 502L605.6 492H614.1L629.9 502H623.6L618.8 499H600.2L595.8 502ZM609.7 493.6L617 497.6H602.4Z" fill="#ff0000" fill-rule="evenodd"/>
<rect x="589" y="502" width="38" height="1" fill="#60ff60" fill-opacity="0.4"/><rect x="605" y="502" width="6" height="4" fill="#00f000"/>
<rect x="593" y="508" width="38" height="1" fill="#e0d890" fill-opacity="0.6"/>
<rect x="591" y="507" width="43" height="1" fill="#a0a0ff"/><rect x="591" y="507" width="5" height="1" fill="#2020ff"/><rect x="628" y="507" width="6" height="1" fill="#0000ff"/>
<text transform="translate(444.54 530) scale(0.9592 1.0)" font-size="13.75" fill="#0c0c78" stroke="#0c0c78" stroke-width="0.18" text-anchor="start" xml:space="preserve">Multiz</text>
<text transform="translate(483.80 530) scale(0.9451 1.0)" font-size="13.75" fill="#0c0c78" stroke="#0c0c78" stroke-width="0.18" text-anchor="start" xml:space="preserve">Alignments</text>
<text transform="translate(552.90 530) scale(0.9359 1.0)" font-size="13.75" fill="#0c0c78" stroke="#0c0c78" stroke-width="0.18" text-anchor="start" xml:space="preserve">of</text>
<text transform="translate(567.62 530) scale(0.8836 1.0)" font-size="13.75" fill="#0c0c78" stroke="#0c0c78" stroke-width="0.18" text-anchor="start" xml:space="preserve">100</text>
<text transform="translate(593.00 530) scale(0.9383 1.0)" font-size="13.75" fill="#0c0c78" stroke="#0c0c78" stroke-width="0.18" text-anchor="start" xml:space="preserve">Vertebrates</text>
<text transform="translate(121.10 544) scale(0.9185 1.0)" font-size="13.75" fill="#e08a1e" stroke="#e08a1e" stroke-width="0.18" text-anchor="start" xml:space="preserve">Gaps</text>
<path d="M155.2 535H157V544H155.2V537.6Q154.6 538 153.4 538.2V536.8Q154.7 536.4 155.2 535Z" fill="#e08a1e" fill-opacity="0.85"/>
<rect x="156" y="561" width="1" height="14" fill="#e08a1e"/>
<text transform="translate(110.45 559) scale(0.9537 1.0)" font-size="13.75" fill="#0c0c78" stroke="#0c0c78" stroke-width="0.18" text-anchor="start" xml:space="preserve">Human</text>
<text transform="translate(184.50 559) scale(0.9500 1.0)" font-size="13.75" fill="#0c0c78" stroke="#0c0c78" stroke-width="0.18" text-anchor="middle" xml:space="preserve">A</text>
<text transform="translate(245.53 559) scale(0.9500 1.0)" font-size="13.75" fill="#0c0c78" stroke="#0c0c78" stroke-width="0.18" text-anchor="middle" xml:space="preserve">C</text>
<text transform="translate(306.56 559) scale(0.9500 1.0)" font-size="13.75" fill="#0c0c78" stroke="#0c0c78" stroke-width="0.18" text-anchor="middle" xml:space="preserve">C</text>
<text transform="translate(367.59 559) scale(0.9500 1.0)" font-size="13.75" fill="#0c0c78" stroke="#0c0c78" stroke-width="0.18" text-anchor="middle" xml:space="preserve">T</text>
<text transform="translate(428.62 559) scale(0.9500 1.0)" font-size="13.75" fill="#0c0c78" stroke="#0c0c78" stroke-width="0.18" text-anchor="middle" xml:space="preserve">T</text>
<text transform="translate(489.65 559) scale(0.9500 1.0)" font-size="13.75" fill="#0c0c78" stroke="#0c0c78" stroke-width="0.18" text-anchor="middle" xml:space="preserve">T</text>
<text transform="translate(550.68 559) scale(0.9500 1.0)" font-size="13.75" fill="#0c0c78" stroke="#0c0c78" stroke-width="0.18" text-anchor="middle" xml:space="preserve">C</text>
<text transform="translate(611.71 559) scale(0.9500 1.0)" font-size="13.75" fill="#0c0c78" stroke="#0c0c78" stroke-width="0.18" text-anchor="middle" xml:space="preserve">A</text>
<text transform="translate(672.74 559) scale(0.9500 1.0)" font-size="13.75" fill="#0c0c78" stroke="#0c0c78" stroke-width="0.18" text-anchor="middle" xml:space="preserve">G</text>
<text transform="translate(733.77 559) scale(0.9500 1.0)" font-size="13.75" fill="#0c0c78" stroke="#0c0c78" stroke-width="0.18" text-anchor="middle" xml:space="preserve">T</text>
<text transform="translate(794.80 559) scale(0.9500 1.0)" font-size="13.75" fill="#0c0c78" stroke="#0c0c78" stroke-width="0.18" text-anchor="middle" xml:space="preserve">T</text>
<text transform="translate(855.83 559) scale(0.9500 1.0)" font-size="13.75" fill="#0c0c78" stroke="#0c0c78" stroke-width="0.18" text-anchor="middle" xml:space="preserve">T</text>
<text transform="translate(916.86 559) scale(0.9500 1.0)" font-size="13.75" fill="#0c0c78" stroke="#0c0c78" stroke-width="0.18" text-anchor="middle" xml:space="preserve">G</text>
<text transform="translate(107.65 574) scale(0.9509 1.0)" font-size="13.75" fill="#0c0c78" stroke="#0c0c78" stroke-width="0.18" text-anchor="start" xml:space="preserve">Rhesus</text>
<text transform="translate(184.50 574) scale(0.9500 1.0)" font-size="13.75" fill="#0c0c78" stroke="#0c0c78" stroke-width="0.18" text-anchor="middle" xml:space="preserve">A</text>
<text transform="translate(245.53 574) scale(0.9500 1.0)" font-size="13.75" fill="#0c0c78" stroke="#0c0c78" stroke-width="0.18" text-anchor="middle" xml:space="preserve">C</text>
<text transform="translate(306.56 574) scale(0.9500 1.0)" font-size="13.75" fill="#0c0c78" stroke="#0c0c78" stroke-width="0.18" text-anchor="middle" xml:space="preserve">C</text>
<text transform="translate(367.59 574) scale(0.9500 1.0)" font-size="13.75" fill="#0c0c78" stroke="#0c0c78" stroke-width="0.18" text-anchor="middle" xml:space="preserve">T</text>
<text transform="translate(428.62 574) scale(0.9500 1.0)" font-size="13.75" fill="#0c0c78" stroke="#0c0c78" stroke-width="0.18" text-anchor="middle" xml:space="preserve">T</text>
<text transform="translate(489.65 574) scale(0.9500 1.0)" font-size="13.75" fill="#0c0c78" stroke="#0c0c78" stroke-width="0.18" text-anchor="middle" xml:space="preserve">T</text>
<text transform="translate(550.68 574) scale(0.9500 1.0)" font-size="13.75" fill="#0c0c78" stroke="#0c0c78" stroke-width="0.18" text-anchor="middle" xml:space="preserve">C</text>
<text transform="translate(611.71 574) scale(0.9500 1.0)" font-size="13.75" fill="#0c0c78" stroke="#0c0c78" stroke-width="0.18" text-anchor="middle" xml:space="preserve">A</text>
<text transform="translate(672.74 574) scale(0.9500 1.0)" font-size="13.75" fill="#0c0c78" stroke="#0c0c78" stroke-width="0.18" text-anchor="middle" xml:space="preserve">G</text>
<text transform="translate(733.77 574) scale(0.9500 1.0)" font-size="13.75" fill="#0c0c78" stroke="#0c0c78" stroke-width="0.18" text-anchor="middle" xml:space="preserve">T</text>
<text transform="translate(794.80 574) scale(0.9500 1.0)" font-size="13.75" fill="#0c0c78" stroke="#0c0c78" stroke-width="0.18" text-anchor="middle" xml:space="preserve">T</text>
<text transform="translate(855.83 574) scale(0.9500 1.0)" font-size="13.75" fill="#0c0c78" stroke="#0c0c78" stroke-width="0.18" text-anchor="middle" xml:space="preserve">T</text>
<text transform="translate(916.86 574) scale(0.9500 1.0)" font-size="13.75" fill="#0c0c78" stroke="#0c0c78" stroke-width="0.18" text-anchor="middle" xml:space="preserve">G</text>
<text transform="translate(112.34 589) scale(0.9551 1.0)" font-size="13.75" fill="#006400" stroke="#006400" stroke-width="0.18" text-anchor="start" xml:space="preserve">Mouse</text>
<rect x="181.50" y="584" width="6.5" height="1" fill="#6e6ea8"/><rect x="181.50" y="587" width="6.5" height="1" fill="#6e6ea8"/>
<rect x="242.53" y="584" width="6.5" height="1" fill="#6e6ea8"/><rect x="242.53" y="587" width="6.5" height="1" fill="#6e6ea8"/>
<rect x="303.56" y="584" width="6.5" height="1" fill="#6e6ea8"/><rect x="303.56" y="587" width="6.5" height="1" fill="#6e6ea8"/>
<rect x="364.59" y="584" width="6.5" height="1" fill="#6e6ea8"/><rect x="364.59" y="587" width="6.5" height="1" fill="#6e6ea8"/>
<rect x="425.62" y="584" width="6.5" height="1" fill="#6e6ea8"/><rect x="425.62" y="587" width="6.5" height="1" fill="#6e6ea8"/>
<rect x="486.65" y="584" width="6.5" height="1" fill="#6e6ea8"/><rect x="486.65" y="587" width="6.5" height="1" fill="#6e6ea8"/>
<rect x="547.68" y="584" width="6.5" height="1" fill="#6e6ea8"/><rect x="547.68" y="587" width="6.5" height="1" fill="#6e6ea8"/>
<rect x="608.71" y="584" width="6.5" height="1" fill="#6e6ea8"/><rect x="608.71" y="587" width="6.5" height="1" fill="#6e6ea8"/>
<rect x="669.74" y="584" width="6.5" height="1" fill="#6e6ea8"/><rect x="669.74" y="587" width="6.5" height="1" fill="#6e6ea8"/>
<rect x="730.77" y="584" width="6.5" height="1" fill="#6e6ea8"/><rect x="730.77" y="587" width="6.5" height="1" fill="#6e6ea8"/>
<rect x="791.80" y="584" width="6.5" height="1" fill="#6e6ea8"/><rect x="791.80" y="587" width="6.5" height="1" fill="#6e6ea8"/>
<rect x="852.83" y="584" width="6.5" height="1" fill="#6e6ea8"/><rect x="852.83" y="587" width="6.5" height="1" fill="#6e6ea8"/>
<rect x="913.86" y="584" width="6.5" height="1" fill="#6e6ea8"/><rect x="913.86" y="587" width="6.5" height="1" fill="#6e6ea8"/>
<text transform="translate(128.54 604) scale(0.9586 1.0)" font-size="13.75" fill="#0c0c78" stroke="#0c0c78" stroke-width="0.18" text-anchor="start" xml:space="preserve">Dog</text>
<rect x="181.50" y="599" width="6.5" height="1" fill="#6e6ea8"/><rect x="181.50" y="602" width="6.5" height="1" fill="#6e6ea8"/>
<rect x="242.53" y="599" width="6.5" height="1" fill="#6e6ea8"/><rect x="242.53" y="602" width="6.5" height="1" fill="#6e6ea8"/>
<rect x="303.56" y="599" width="6.5" height="1" fill="#6e6ea8"/><rect x="303.56" y="602" width="6.5" height="1" fill="#6e6ea8"/>
<rect x="364.59" y="599" width="6.5" height="1" fill="#6e6ea8"/><rect x="364.59" y="602" width="6.5" height="1" fill="#6e6ea8"/>
<rect x="425.62" y="599" width="6.5" height="1" fill="#6e6ea8"/><rect x="425.62" y="602" width="6.5" height="1" fill="#6e6ea8"/>
<rect x="486.65" y="599" width="6.5" height="1" fill="#6e6ea8"/><rect x="486.65" y="602" width="6.5" height="1" fill="#6e6ea8"/>
<rect x="547.68" y="599" width="6.5" height="1" fill="#6e6ea8"/><rect x="547.68" y="602" width="6.5" height="1" fill="#6e6ea8"/>
<rect x="608.71" y="599" width="6.5" height="1" fill="#6e6ea8"/><rect x="608.71" y="602" width="6.5" height="1" fill="#6e6ea8"/>
<rect x="669.74" y="599" width="6.5" height="1" fill="#6e6ea8"/><rect x="669.74" y="602" width="6.5" height="1" fill="#6e6ea8"/>
<rect x="730.77" y="599" width="6.5" height="1" fill="#6e6ea8"/><rect x="730.77" y="602" width="6.5" height="1" fill="#6e6ea8"/>
<rect x="791.80" y="599" width="6.5" height="1" fill="#6e6ea8"/><rect x="791.80" y="602" width="6.5" height="1" fill="#6e6ea8"/>
<rect x="852.83" y="599" width="6.5" height="1" fill="#6e6ea8"/><rect x="852.83" y="602" width="6.5" height="1" fill="#6e6ea8"/>
<rect x="913.86" y="599" width="6.5" height="1" fill="#6e6ea8"/><rect x="913.86" y="602" width="6.5" height="1" fill="#6e6ea8"/>
<text transform="translate(100.55 619) scale(0.9465 1.0)" font-size="13.75" fill="#006400" stroke="#006400" stroke-width="0.18" text-anchor="start" xml:space="preserve">Elephant</text>
<rect x="181.50" y="614" width="6.5" height="1" fill="#6e6ea8"/><rect x="181.50" y="617" width="6.5" height="1" fill="#6e6ea8"/>
<rect x="242.53" y="614" width="6.5" height="1" fill="#6e6ea8"/><rect x="242.53" y="617" width="6.5" height="1" fill="#6e6ea8"/>
<rect x="303.56" y="614" width="6.5" height="1" fill="#6e6ea8"/><rect x="303.56" y="617" width="6.5" height="1" fill="#6e6ea8"/>
<rect x="364.59" y="614" width="6.5" height="1" fill="#6e6ea8"/><rect x="364.59" y="617" width="6.5" height="1" fill="#6e6ea8"/>
<rect x="425.62" y="614" width="6.5" height="1" fill="#6e6ea8"/><rect x="425.62" y="617" width="6.5" height="1" fill="#6e6ea8"/>
<rect x="486.65" y="614" width="6.5" height="1" fill="#6e6ea8"/><rect x="486.65" y="617" width="6.5" height="1" fill="#6e6ea8"/>
<rect x="547.68" y="614" width="6.5" height="1" fill="#6e6ea8"/><rect x="547.68" y="617" width="6.5" height="1" fill="#6e6ea8"/>
<rect x="608.71" y="614" width="6.5" height="1" fill="#6e6ea8"/><rect x="608.71" y="617" width="6.5" height="1" fill="#6e6ea8"/>
<rect x="669.74" y="614" width="6.5" height="1" fill="#6e6ea8"/><rect x="669.74" y="617" width="6.5" height="1" fill="#6e6ea8"/>
<rect x="730.77" y="614" width="6.5" height="1" fill="#6e6ea8"/><rect x="730.77" y="617" width="6.5" height="1" fill="#6e6ea8"/>
<rect x="791.80" y="614" width="6.5" height="1" fill="#6e6ea8"/><rect x="791.80" y="617" width="6.5" height="1" fill="#6e6ea8"/>
<rect x="852.83" y="614" width="6.5" height="1" fill="#6e6ea8"/><rect x="852.83" y="617" width="6.5" height="1" fill="#6e6ea8"/>
<rect x="913.86" y="614" width="6.5" height="1" fill="#6e6ea8"/><rect x="913.86" y="617" width="6.5" height="1" fill="#6e6ea8"/>
<text transform="translate(105.10 634) scale(0.9586 1.0)" font-size="13.75" fill="#006400" stroke="#006400" stroke-width="0.18" text-anchor="start" xml:space="preserve">Chicken</text>
<rect x="181.50" y="629" width="6.5" height="1" fill="#6e6ea8"/><rect x="181.50" y="632" width="6.5" height="1" fill="#6e6ea8"/>
<rect x="242.53" y="629" width="6.5" height="1" fill="#6e6ea8"/><rect x="242.53" y="632" width="6.5" height="1" fill="#6e6ea8"/>
<rect x="303.56" y="629" width="6.5" height="1" fill="#6e6ea8"/><rect x="303.56" y="632" width="6.5" height="1" fill="#6e6ea8"/>
<rect x="364.59" y="629" width="6.5" height="1" fill="#6e6ea8"/><rect x="364.59" y="632" width="6.5" height="1" fill="#6e6ea8"/>
<rect x="425.62" y="629" width="6.5" height="1" fill="#6e6ea8"/><rect x="425.62" y="632" width="6.5" height="1" fill="#6e6ea8"/>
<rect x="486.65" y="629" width="6.5" height="1" fill="#6e6ea8"/><rect x="486.65" y="632" width="6.5" height="1" fill="#6e6ea8"/>
<rect x="547.68" y="629" width="6.5" height="1" fill="#6e6ea8"/><rect x="547.68" y="632" width="6.5" height="1" fill="#6e6ea8"/>
<rect x="608.71" y="629" width="6.5" height="1" fill="#6e6ea8"/><rect x="608.71" y="632" width="6.5" height="1" fill="#6e6ea8"/>
<rect x="669.74" y="629" width="6.5" height="1" fill="#6e6ea8"/><rect x="669.74" y="632" width="6.5" height="1" fill="#6e6ea8"/>
<rect x="730.77" y="629" width="6.5" height="1" fill="#6e6ea8"/><rect x="730.77" y="632" width="6.5" height="1" fill="#6e6ea8"/>
<rect x="791.80" y="629" width="6.5" height="1" fill="#6e6ea8"/><rect x="791.80" y="632" width="6.5" height="1" fill="#6e6ea8"/>
<rect x="852.83" y="629" width="6.5" height="1" fill="#6e6ea8"/><rect x="852.83" y="632" width="6.5" height="1" fill="#6e6ea8"/>
<rect x="913.86" y="629" width="6.5" height="1" fill="#6e6ea8"/><rect x="913.86" y="632" width="6.5" height="1" fill="#6e6ea8"/>
<text transform="translate(83.70 649) scale(0.9607 1.0)" font-size="13.75" fill="#0c0c78" stroke="#0c0c78" stroke-width="0.18" text-anchor="start" xml:space="preserve">X_tropicalis</text>
<rect x="181.50" y="644" width="6.5" height="1" fill="#6e6ea8"/><rect x="181.50" y="647" width="6.5" height="1" fill="#6e6ea8"/>
<rect x="242.53" y="644" width="6.5" height="1" fill="#6e6ea8"/><rect x="242.53" y="647" width="6.5" height="1" fill="#6e6ea8"/>
<rect x="303.56" y="644" width="6.5" height="1" fill="#6e6ea8"/><rect x="303.56" y="647" width="6.5" height="1" fill="#6e6ea8"/>
<rect x="364.59" y="644" width="6.5" height="1" fill="#6e6ea8"/><rect x="364.59" y="647" width="6.5" height="1" fill="#6e6ea8"/>
<rect x="425.62" y="644" width="6.5" height="1" fill="#6e6ea8"/><rect x="425.62" y="647" width="6.5" height="1" fill="#6e6ea8"/>
<rect x="486.65" y="644" width="6.5" height="1" fill="#6e6ea8"/><rect x="486.65" y="647" width="6.5" height="1" fill="#6e6ea8"/>
<rect x="547.68" y="644" width="6.5" height="1" fill="#6e6ea8"/><rect x="547.68" y="647" width="6.5" height="1" fill="#6e6ea8"/>
<rect x="608.71" y="644" width="6.5" height="1" fill="#6e6ea8"/><rect x="608.71" y="647" width="6.5" height="1" fill="#6e6ea8"/>
<rect x="669.74" y="644" width="6.5" height="1" fill="#6e6ea8"/><rect x="669.74" y="647" width="6.5" height="1" fill="#6e6ea8"/>
<rect x="730.77" y="644" width="6.5" height="1" fill="#6e6ea8"/><rect x="730.77" y="647" width="6.5" height="1" fill="#6e6ea8"/>
<rect x="791.80" y="644" width="6.5" height="1" fill="#6e6ea8"/><rect x="791.80" y="647" width="6.5" height="1" fill="#6e6ea8"/>
<rect x="852.83" y="644" width="6.5" height="1" fill="#6e6ea8"/><rect x="852.83" y="647" width="6.5" height="1" fill="#6e6ea8"/>
<rect x="913.86" y="644" width="6.5" height="1" fill="#6e6ea8"/><rect x="913.86" y="647" width="6.5" height="1" fill="#6e6ea8"/>
<text transform="translate(97.80 664) scale(0.9582 1.0)" font-size="13.75" fill="#006400" stroke="#006400" stroke-width="0.18" text-anchor="start" xml:space="preserve">Zebrafish</text>
<rect x="181.50" y="659" width="6.5" height="1" fill="#6e6ea8"/><rect x="181.50" y="662" width="6.5" height="1" fill="#6e6ea8"/>
<rect x="242.53" y="659" width="6.5" height="1" fill="#6e6ea8"/><rect x="242.53" y="662" width="6.5" height="1" fill="#6e6ea8"/>
<rect x="303.56" y="659" width="6.5" height="1" fill="#6e6ea8"/><rect x="303.56" y="662" width="6.5" height="1" fill="#6e6ea8"/>
<rect x="364.59" y="659" width="6.5" height="1" fill="#6e6ea8"/><rect x="364.59" y="662" width="6.5" height="1" fill="#6e6ea8"/>
<rect x="425.62" y="659" width="6.5" height="1" fill="#6e6ea8"/><rect x="425.62" y="662" width="6.5" height="1" fill="#6e6ea8"/>
<rect x="486.65" y="659" width="6.5" height="1" fill="#6e6ea8"/><rect x="486.65" y="662" width="6.5" height="1" fill="#6e6ea8"/>
<rect x="547.68" y="659" width="6.5" height="1" fill="#6e6ea8"/><rect x="547.68" y="662" width="6.5" height="1" fill="#6e6ea8"/>
<rect x="608.71" y="659" width="6.5" height="1" fill="#6e6ea8"/><rect x="608.71" y="662" width="6.5" height="1" fill="#6e6ea8"/>
<rect x="669.74" y="659" width="6.5" height="1" fill="#6e6ea8"/><rect x="669.74" y="662" width="6.5" height="1" fill="#6e6ea8"/>
<rect x="730.77" y="659" width="6.5" height="1" fill="#6e6ea8"/><rect x="730.77" y="662" width="6.5" height="1" fill="#6e6ea8"/>
<rect x="791.80" y="659" width="6.5" height="1" fill="#6e6ea8"/><rect x="791.80" y="662" width="6.5" height="1" fill="#6e6ea8"/>
<rect x="852.83" y="659" width="6.5" height="1" fill="#6e6ea8"/><rect x="852.83" y="662" width="6.5" height="1" fill="#6e6ea8"/>
<rect x="913.86" y="659" width="6.5" height="1" fill="#6e6ea8"/><rect x="913.86" y="662" width="6.5" height="1" fill="#6e6ea8"/>
<text transform="translate(440.87 680) scale(0.9305 1.0)" font-size="13.75" fill="#000" stroke="#000" stroke-width="0.18" text-anchor="start" xml:space="preserve">Repeating</text>
<text transform="translate(502.75 680) scale(0.9479 1.0)" font-size="13.75" fill="#000" stroke="#000" stroke-width="0.18" text-anchor="start" xml:space="preserve">Elements</text>
<text transform="translate(562.30 680) scale(0.8875 1.0)" font-size="13.75" fill="#000" stroke="#000" stroke-width="0.18" text-anchor="start" xml:space="preserve">by</text>
<text transform="translate(579.47 680) scale(0.9332 1.0)" font-size="13.75" fill="#000" stroke="#000" stroke-width="0.18" text-anchor="start" xml:space="preserve">RepeatMasker</text>
<text transform="translate(67.56 694) scale(0.9399 1.0)" font-size="13.75" fill="#000" stroke="#000" stroke-width="0.18" text-anchor="start" xml:space="preserve">RepeatMasker</text>
<rect x="154" y="0" width="1" height="713" fill="#ffb0b0"/>
</svg></body></html>
